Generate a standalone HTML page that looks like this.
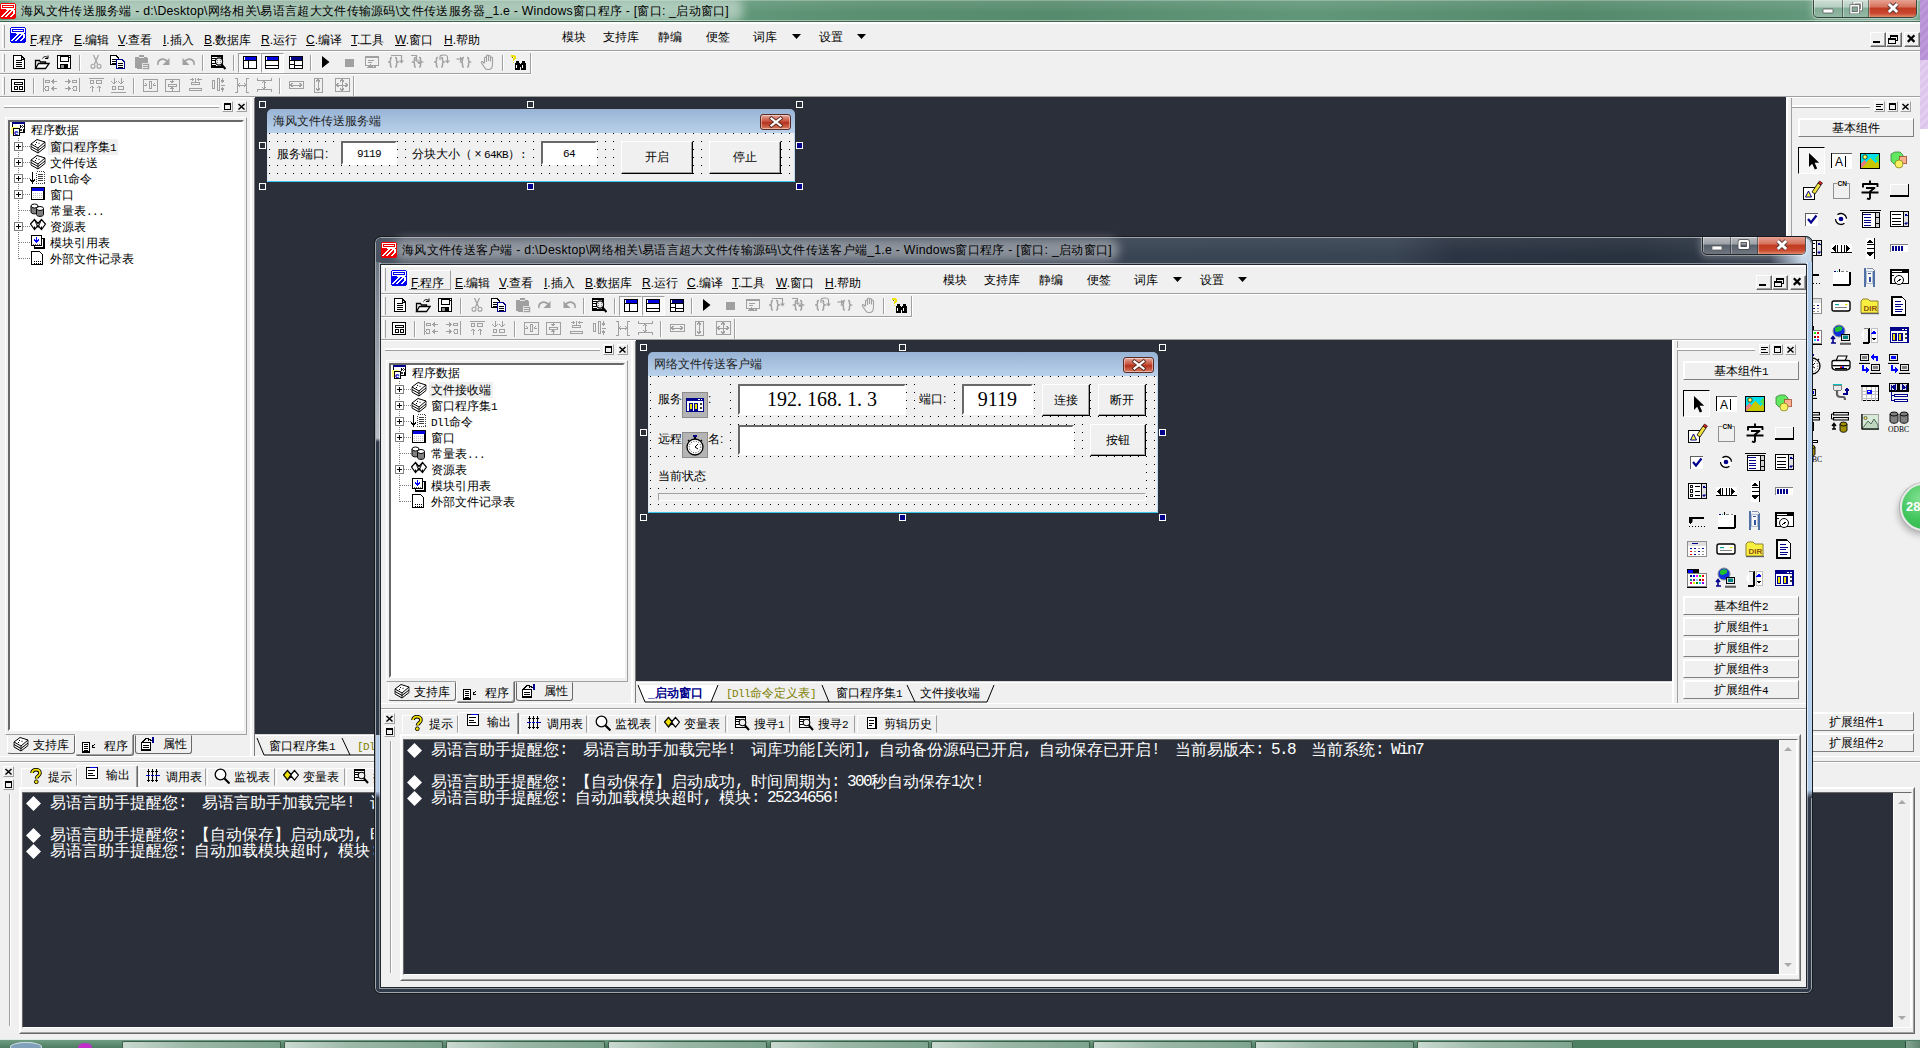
<!DOCTYPE html><html><head><meta charset="utf-8"><title>e</title><style>
html,body{margin:0;padding:0}
body{width:1928px;height:1048px;position:relative;overflow:hidden;background:#fff;font:12px/14px "Liberation Sans",sans-serif;color:#000}
div,span.t,span.o,svg,i{position:absolute;box-sizing:border-box}
svg{overflow:visible}
.t{white-space:nowrap;font-size:12px;line-height:14px}
.tc{white-space:nowrap;font-size:12px;line-height:19px;position:static}
.o{white-space:nowrap;font-size:16px;line-height:16px;color:#fff;letter-spacing:0}
.m{font:16px/16px "Liberation Mono",monospace;letter-spacing:-1.6px}
.s6{font:11px/14px "Liberation Mono",monospace;letter-spacing:-.6px}
u{text-decoration:underline}
a{display:inline-block;width:1em;text-align:center}
.rb{background:#f0f0f0;border:1px solid;border-color:#fff #696969 #696969 #fff;box-shadow:inset -1px -1px #a0a0a0}
.rb1{background:#f0f0f0;border:1px solid;border-color:#fff #a0a0a0 #a0a0a0 #fff}
</style></head><body><svg width="0" height="0" style="position:absolute"><defs><symbol id="logo_red" viewBox="0 0 16 16" shape-rendering="crispEdges"><rect x="1" y="0" width="14" height="1" fill="#f00000"/><rect x="0" y="1" width="1" height="1" fill="#f00000"/><rect x="1" y="1" width="14" height="1" fill="#fff"/><rect x="15" y="1" width="1" height="1" fill="#f00000"/><rect x="0" y="2" width="1" height="1" fill="#f00000"/><rect x="1" y="2" width="1" height="1" fill="#fff"/><rect x="2" y="2" width="12" height="1" fill="#f00000"/><rect x="14" y="2" width="1" height="1" fill="#fff"/><rect x="15" y="2" width="1" height="1" fill="#f00000"/><rect x="0" y="3" width="1" height="1" fill="#f00000"/><rect x="1" y="3" width="1" height="1" fill="#fff"/><rect x="2" y="3" width="1" height="1" fill="#f00000"/><rect x="3" y="3" width="10" height="1" fill="#fff"/><rect x="13" y="3" width="1" height="1" fill="#f00000"/><rect x="14" y="3" width="1" height="1" fill="#fff"/><rect x="15" y="3" width="1" height="1" fill="#f00000"/><rect x="0" y="4" width="1" height="1" fill="#f00000"/><rect x="1" y="4" width="1" height="1" fill="#fff"/><rect x="2" y="4" width="12" height="1" fill="#f00000"/><rect x="14" y="4" width="1" height="1" fill="#fff"/><rect x="15" y="4" width="1" height="1" fill="#f00000"/><rect x="0" y="5" width="1" height="1" fill="#f00000"/><rect x="1" y="5" width="14" height="1" fill="#fff"/><rect x="15" y="5" width="1" height="1" fill="#f00000"/><rect x="0" y="6" width="6" height="1" fill="#f00000"/><rect x="6" y="6" width="8" height="1" fill="#fff"/><rect x="14" y="6" width="2" height="1" fill="#f00000"/><rect x="0" y="7" width="7" height="1" fill="#f00000"/><rect x="7" y="7" width="2" height="1" fill="#fff"/><rect x="9" y="7" width="2" height="1" fill="#f00000"/><rect x="11" y="7" width="4" height="1" fill="#fff"/><rect x="15" y="7" width="1" height="1" fill="#f00000"/><rect x="0" y="8" width="6" height="1" fill="#f00000"/><rect x="6" y="8" width="2" height="1" fill="#fff"/><rect x="8" y="8" width="2" height="1" fill="#f00000"/><rect x="10" y="8" width="2" height="1" fill="#fff"/><rect x="12" y="8" width="1" height="1" fill="#f00000"/><rect x="13" y="8" width="2" height="1" fill="#fff"/><rect x="15" y="8" width="1" height="1" fill="#f00000"/><rect x="0" y="9" width="5" height="1" fill="#f00000"/><rect x="5" y="9" width="2" height="1" fill="#fff"/><rect x="7" y="9" width="2" height="1" fill="#f00000"/><rect x="9" y="9" width="2" height="1" fill="#fff"/><rect x="11" y="9" width="2" height="1" fill="#f00000"/><rect x="13" y="9" width="2" height="1" fill="#fff"/><rect x="15" y="9" width="1" height="1" fill="#f00000"/><rect x="0" y="10" width="4" height="1" fill="#f00000"/><rect x="4" y="10" width="2" height="1" fill="#fff"/><rect x="6" y="10" width="2" height="1" fill="#f00000"/><rect x="8" y="10" width="2" height="1" fill="#fff"/><rect x="10" y="10" width="3" height="1" fill="#f00000"/><rect x="13" y="10" width="2" height="1" fill="#fff"/><rect x="15" y="10" width="1" height="1" fill="#f00000"/><rect x="0" y="11" width="3" height="1" fill="#f00000"/><rect x="3" y="11" width="2" height="1" fill="#fff"/><rect x="5" y="11" width="2" height="1" fill="#f00000"/><rect x="7" y="11" width="2" height="1" fill="#fff"/><rect x="9" y="11" width="3" height="1" fill="#f00000"/><rect x="12" y="11" width="2" height="1" fill="#fff"/><rect x="14" y="11" width="2" height="1" fill="#f00000"/><rect x="0" y="12" width="2" height="1" fill="#f00000"/><rect x="2" y="12" width="2" height="1" fill="#fff"/><rect x="4" y="12" width="2" height="1" fill="#f00000"/><rect x="6" y="12" width="2" height="1" fill="#fff"/><rect x="8" y="12" width="3" height="1" fill="#f00000"/><rect x="11" y="12" width="2" height="1" fill="#fff"/><rect x="13" y="12" width="3" height="1" fill="#f00000"/><rect x="0" y="13" width="1" height="1" fill="#f00000"/><rect x="1" y="13" width="2" height="1" fill="#fff"/><rect x="3" y="13" width="2" height="1" fill="#f00000"/><rect x="5" y="13" width="2" height="1" fill="#fff"/><rect x="7" y="13" width="3" height="1" fill="#f00000"/><rect x="10" y="13" width="2" height="1" fill="#fff"/><rect x="12" y="13" width="4" height="1" fill="#f00000"/><rect x="0" y="14" width="16" height="1" fill="#f00000"/><rect x="1" y="15" width="14" height="1" fill="#f00000"/></symbol><symbol id="logo_blue" viewBox="0 0 16 16" shape-rendering="crispEdges"><rect x="1" y="0" width="14" height="1" fill="#0000f0"/><rect x="0" y="1" width="1" height="1" fill="#0000f0"/><rect x="1" y="1" width="14" height="1" fill="#fff"/><rect x="15" y="1" width="1" height="1" fill="#0000f0"/><rect x="0" y="2" width="1" height="1" fill="#0000f0"/><rect x="1" y="2" width="1" height="1" fill="#fff"/><rect x="2" y="2" width="12" height="1" fill="#0000f0"/><rect x="14" y="2" width="1" height="1" fill="#fff"/><rect x="15" y="2" width="1" height="1" fill="#0000f0"/><rect x="0" y="3" width="1" height="1" fill="#0000f0"/><rect x="1" y="3" width="1" height="1" fill="#fff"/><rect x="2" y="3" width="1" height="1" fill="#0000f0"/><rect x="3" y="3" width="10" height="1" fill="#fff"/><rect x="13" y="3" width="1" height="1" fill="#0000f0"/><rect x="14" y="3" width="1" height="1" fill="#fff"/><rect x="15" y="3" width="1" height="1" fill="#0000f0"/><rect x="0" y="4" width="1" height="1" fill="#0000f0"/><rect x="1" y="4" width="1" height="1" fill="#fff"/><rect x="2" y="4" width="12" height="1" fill="#0000f0"/><rect x="14" y="4" width="1" height="1" fill="#fff"/><rect x="15" y="4" width="1" height="1" fill="#0000f0"/><rect x="0" y="5" width="1" height="1" fill="#0000f0"/><rect x="1" y="5" width="14" height="1" fill="#fff"/><rect x="15" y="5" width="1" height="1" fill="#0000f0"/><rect x="0" y="6" width="6" height="1" fill="#0000f0"/><rect x="6" y="6" width="8" height="1" fill="#fff"/><rect x="14" y="6" width="2" height="1" fill="#0000f0"/><rect x="0" y="7" width="7" height="1" fill="#0000f0"/><rect x="7" y="7" width="2" height="1" fill="#fff"/><rect x="9" y="7" width="2" height="1" fill="#0000f0"/><rect x="11" y="7" width="4" height="1" fill="#fff"/><rect x="15" y="7" width="1" height="1" fill="#0000f0"/><rect x="0" y="8" width="6" height="1" fill="#0000f0"/><rect x="6" y="8" width="2" height="1" fill="#fff"/><rect x="8" y="8" width="2" height="1" fill="#0000f0"/><rect x="10" y="8" width="2" height="1" fill="#fff"/><rect x="12" y="8" width="1" height="1" fill="#0000f0"/><rect x="13" y="8" width="2" height="1" fill="#fff"/><rect x="15" y="8" width="1" height="1" fill="#0000f0"/><rect x="0" y="9" width="5" height="1" fill="#0000f0"/><rect x="5" y="9" width="2" height="1" fill="#fff"/><rect x="7" y="9" width="2" height="1" fill="#0000f0"/><rect x="9" y="9" width="2" height="1" fill="#fff"/><rect x="11" y="9" width="2" height="1" fill="#0000f0"/><rect x="13" y="9" width="2" height="1" fill="#fff"/><rect x="15" y="9" width="1" height="1" fill="#0000f0"/><rect x="0" y="10" width="4" height="1" fill="#0000f0"/><rect x="4" y="10" width="2" height="1" fill="#fff"/><rect x="6" y="10" width="2" height="1" fill="#0000f0"/><rect x="8" y="10" width="2" height="1" fill="#fff"/><rect x="10" y="10" width="3" height="1" fill="#0000f0"/><rect x="13" y="10" width="2" height="1" fill="#fff"/><rect x="15" y="10" width="1" height="1" fill="#0000f0"/><rect x="0" y="11" width="3" height="1" fill="#0000f0"/><rect x="3" y="11" width="2" height="1" fill="#fff"/><rect x="5" y="11" width="2" height="1" fill="#0000f0"/><rect x="7" y="11" width="2" height="1" fill="#fff"/><rect x="9" y="11" width="3" height="1" fill="#0000f0"/><rect x="12" y="11" width="2" height="1" fill="#fff"/><rect x="14" y="11" width="2" height="1" fill="#0000f0"/><rect x="0" y="12" width="2" height="1" fill="#0000f0"/><rect x="2" y="12" width="2" height="1" fill="#fff"/><rect x="4" y="12" width="2" height="1" fill="#0000f0"/><rect x="6" y="12" width="2" height="1" fill="#fff"/><rect x="8" y="12" width="3" height="1" fill="#0000f0"/><rect x="11" y="12" width="2" height="1" fill="#fff"/><rect x="13" y="12" width="3" height="1" fill="#0000f0"/><rect x="0" y="13" width="1" height="1" fill="#0000f0"/><rect x="1" y="13" width="2" height="1" fill="#fff"/><rect x="3" y="13" width="2" height="1" fill="#0000f0"/><rect x="5" y="13" width="2" height="1" fill="#fff"/><rect x="7" y="13" width="3" height="1" fill="#0000f0"/><rect x="10" y="13" width="2" height="1" fill="#fff"/><rect x="12" y="13" width="4" height="1" fill="#0000f0"/><rect x="0" y="14" width="16" height="1" fill="#0000f0"/><rect x="1" y="15" width="14" height="1" fill="#0000f0"/></symbol><symbol id="new" viewBox="0 0 16 16" shape-rendering="crispEdges"><path d="M3.5,1.5h7.5l3.5,3.5v9.5h-11z" fill="#fff" stroke="#000" stroke-width="1.4" /><path d="M11,1.5v3.5h3.5" fill="none" stroke="#000" stroke-width="1" /><rect x="5.5" y="6" width="6.5" height="1" fill="#000"/><rect x="5.5" y="8" width="6.5" height="1" fill="#000"/><rect x="5.5" y="10" width="6.5" height="1" fill="#000"/><rect x="5.5" y="12" width="6.5" height="1" fill="#000"/></symbol><symbol id="open" viewBox="0 0 16 16"><path d="M1.5,14.5v-8h4l1,1.5h5v2.5" fill="none" stroke="#000" stroke-width="1.3" /><path d="M1.5,14.5l3,-5h10.5l-3.5,5z" fill="#fff" stroke="#000" stroke-width="1.3" /><path d="M8.5,4.5c1.5,-2.5 4,-2.5 5,-0.5M14,1.5v3h-3" fill="none" stroke="#000" stroke-width="1" /></symbol><symbol id="save" viewBox="0 0 16 16" shape-rendering="crispEdges"><rect x="1.7" y="1.7" width="12.6" height="12.6" fill="#fff" stroke="#000" stroke-width="1.4"/><rect x="4" y="2" width="8" height="5" fill="#fff"/><rect x="4.0" y="2.0" width="8" height="5" fill="none" stroke="#000" stroke-width="1"/><rect x="4" y="10" width="8" height="4.5" fill="#000"/><rect x="5" y="11" width="3" height="3" fill="#909090"/><rect x="12.5" y="2.5" width="1" height="1.5" fill="#000"/></symbol><symbol id="cut" viewBox="0 0 16 16"><path d="M5.5,1l4,9M10.5,1l-4,9" fill="none" stroke="#a0a0a0" stroke-width="1.2" /><circle cx="5" cy="12.3" r="2" fill="none" stroke="#a0a0a0" stroke-width="1.1"/><circle cx="11" cy="12.3" r="2" fill="none" stroke="#a0a0a0" stroke-width="1.1"/></symbol><symbol id="copy" viewBox="0 0 16 16" shape-rendering="crispEdges"><path d="M0.7,1.5h5l2.5,2.5v6.5h-7.5z" fill="#fff" stroke="#000" stroke-width="1.3" /><rect x="2" y="4.5" width="4" height="1" fill="#000"/><rect x="2" y="6.5" width="4" height="1" fill="#000"/><rect x="2" y="8.5" width="4" height="1" fill="#000"/><path d="M6.7,5.5h5l2.8,2.8v6.2h-7.8z" fill="#fff" stroke="#00008b" stroke-width="1.3" /><rect x="8.2" y="9" width="4.5" height="1" fill="#000"/><rect x="8.2" y="11" width="4.5" height="1" fill="#000"/><rect x="8.2" y="13" width="4.5" height="1" fill="#000"/></symbol><symbol id="paste" viewBox="0 0 16 16" shape-rendering="crispEdges"><rect x="1" y="2.5" width="12.5" height="12" rx="1.5" fill="#a0a0a0"/><rect x="4.5" y="1" width="5.5" height="3" fill="#a0a0a0"/><rect x="5" y="3.2" width="4.5" height="1" fill="#e8e8e8"/><rect x="8.0" y="9.0" width="7" height="6" fill="#a0a0a0" stroke="#e0e0e0" stroke-width="1"/><rect x="9" y="10.5" width="5" height="1" fill="#e8e8e8"/><rect x="9" y="12.5" width="5" height="1" fill="#e8e8e8"/></symbol><symbol id="redo" viewBox="0 0 16 16"><path d="M2,11c-1,-6 6,-8 10,-3" fill="none" stroke="#a0a0a0" stroke-width="1.6" /><path d="M13.5,4v7h-7z" fill="#a0a0a0" stroke="none" stroke-width="0" /></symbol><symbol id="undo" viewBox="0 0 16 16"><path d="M14,11c1,-6 -6,-8 -10,-3" fill="none" stroke="#a0a0a0" stroke-width="1.6" /><path d="M2.5,4v7h7z" fill="#a0a0a0" stroke="none" stroke-width="0" /></symbol><symbol id="find" viewBox="0 0 16 16" shape-rendering="crispEdges"><rect x="1.3" y="1.8" width="10.4" height="10.9" fill="#fff" stroke="#000" stroke-width="1.6"/><rect x="2" y="3.5" width="4" height="1.2" fill="#000"/><rect x="2" y="6" width="4" height="1.2" fill="#000"/><rect x="2" y="8.5" width="4" height="1.2" fill="#000"/><rect x="2" y="11" width="4" height="1.2" fill="#000"/><circle cx="9" cy="7.5" r="3.6" fill="#f0f0f0" stroke="#000" stroke-width="1.2" shape-rendering="auto"/><rect x="7.3" y="6" width="1" height="1" fill="#888"/><rect x="9.7" y="6" width="1" height="1" fill="#888"/><rect x="7.3" y="8.3" width="1" height="1" fill="#888"/><rect x="9.7" y="8.3" width="1" height="1" fill="#888"/><path d="M11.5,10.5l4,4.5" fill="none" stroke="#000" stroke-width="2.2" shape-rendering="auto"/></symbol><symbol id="lay1" viewBox="0 0 16 16" shape-rendering="crispEdges"><rect x="1.6" y="2.1" width="12.8" height="12.3" fill="#fff" stroke="#000" stroke-width="1.2"/><rect x="2.5" y="3" width="11" height="2.5" fill="#0000e0"/><rect x="1.5" y="6" width="13" height="1.3" fill="#000"/><rect x="5.5" y="6" width="1.3" height="8.5" fill="#000"/></symbol><symbol id="lay2" viewBox="0 0 16 16" shape-rendering="crispEdges"><rect x="1.6" y="2.1" width="12.8" height="12.3" fill="#fff" stroke="#000" stroke-width="1.2"/><rect x="2.5" y="3" width="11" height="2.5" fill="#0000e0"/><rect x="1.5" y="6" width="13" height="1.3" fill="#000"/><rect x="1.5" y="10.5" width="13" height="1.3" fill="#000"/></symbol><symbol id="lay3" viewBox="0 0 16 16" shape-rendering="crispEdges"><rect x="1.6" y="2.1" width="12.8" height="12.3" fill="#fff" stroke="#000" stroke-width="1.2"/><rect x="2.5" y="3" width="11" height="2.5" fill="#00008b"/><rect x="1.5" y="6" width="13" height="1.3" fill="#000"/><rect x="5.5" y="6" width="1.3" height="8.5" fill="#000"/><rect x="1.5" y="9.5" width="4" height="1.3" fill="#000"/><rect x="6" y="11" width="8" height="1.3" fill="#000"/></symbol><symbol id="run" viewBox="0 0 16 16"><path d="M4,2v12l7.5,-6z" fill="#000" stroke="none" stroke-width="0" /></symbol><symbol id="stop" viewBox="0 0 16 16" shape-rendering="crispEdges"><rect x="3" y="4.5" width="8.5" height="8.5" fill="#a0a0a0"/></symbol><symbol id="dbg1" viewBox="0 0 16 16" shape-rendering="crispEdges"><rect x="1.65" y="2.65" width="12.7" height="8.7" fill="none" stroke="#a0a0a0" stroke-width="1.3"/><rect x="1" y="2" width="14" height="2" fill="#a0a0a0"/><rect x="4" y="6" width="6" height="1" fill="#a0a0a0"/><rect x="4" y="8" width="4" height="1" fill="#a0a0a0"/><path d="M3,14l3,-4l3,3l3,-3v4z" fill="#a0a0a0" stroke="none" stroke-width="0" /></symbol><symbol id="dbg2" viewBox="0 0 16 16"><path d="M4,3.5c-2,0 -1.5,1.5 -1.5,3c0,1 -1,1.3 -1.5,1.5c0.5,0.2 1.5,0.5 1.5,1.5c0,1.5 -0.5,3.5 1.5,3.5" fill="none" stroke="#a0a0a0" stroke-width="1.5" /><path d="M7,3.5c2,0 1.5,1.5 1.5,3c0,1 1,1.3 1.5,1.5c-0.5,0.2 -1.5,0.5 -1.5,1.5c0,1.5 0.5,3.5 -1.5,3.5" fill="none" stroke="#a0a0a0" stroke-width="1.5" /><path d="M3,1.5h10.5v6" fill="none" stroke="#a0a0a0" stroke-width="1.2" /><path d="M11,6.5h5l-2.5,3z" fill="#a0a0a0" stroke="none" stroke-width="0" /></symbol><symbol id="dbg3" viewBox="0 0 16 16"><path d="M6,3.5c-2,0 -1.5,1.5 -1.5,3c0,1 -1,1.3 -1.5,1.5c0.5,0.2 1.5,0.5 1.5,1.5c0,1.5 -0.5,3.5 1.5,3.5" fill="none" stroke="#a0a0a0" stroke-width="1.5" /><path d="M9,3.5c2,0 1.5,1.5 1.5,3c0,1 1,1.3 1.5,1.5c-0.5,0.2 -1.5,0.5 -1.5,1.5c0,1.5 0.5,3.5 -1.5,3.5" fill="none" stroke="#a0a0a0" stroke-width="1.5" /><path d="M1,1.5h5.5v4" fill="none" stroke="#a0a0a0" stroke-width="1.2" /><path d="M4.5,5.5h4l-2,2.5z" fill="#a0a0a0" stroke="none" stroke-width="0" /><path d="M9,6v3M7.5,8h3l-1.5,2z" fill="#a0a0a0" stroke="#a0a0a0" stroke-width="0.8" /></symbol><symbol id="dbg4" viewBox="0 0 16 16"><path d="M4,3.5c-2,0 -1.5,1.5 -1.5,3c0,1 -1,1.3 -1.5,1.5c0.5,0.2 1.5,0.5 1.5,1.5c0,1.5 -0.5,3.5 1.5,3.5" fill="none" stroke="#a0a0a0" stroke-width="1.5" /><path d="M7,3.5c2,0 1.5,1.5 1.5,3c0,1 1,1.3 1.5,1.5c-0.5,0.2 -1.5,0.5 -1.5,1.5c0,1.5 0.5,3.5 -1.5,3.5" fill="none" stroke="#a0a0a0" stroke-width="1.5" /><path d="M6,6v-3.5q0,-1.5 3.5,-1.5q4,0 4,2v4" fill="none" stroke="#a0a0a0" stroke-width="1.2" /><path d="M11,6.5h5l-2.5,3z" fill="#a0a0a0" stroke="none" stroke-width="0" /></symbol><symbol id="dbg5" viewBox="0 0 16 16"><path d="M8,3.5c-2,0 -1.5,1.5 -1.5,3c0,1 -1,1.3 -1.5,1.5c0.5,0.2 1.5,0.5 1.5,1.5c0,1.5 -0.5,3.5 1.5,3.5" fill="none" stroke="#a0a0a0" stroke-width="1.5" /><path d="M11,3.5c2,0 1.5,1.5 1.5,3c0,1 1,1.3 1.5,1.5c-0.5,0.2 -1.5,0.5 -1.5,1.5c0,1.5 0.5,3.5 -1.5,3.5" fill="none" stroke="#a0a0a0" stroke-width="1.5" /><path d="M0.5,5h5" fill="none" stroke="#a0a0a0" stroke-width="1.2" /><path d="M4,2.5l3,2.5l-3,2.5z" fill="#a0a0a0" stroke="none" stroke-width="0" /></symbol><symbol id="hand" viewBox="0 0 16 16"><path d="M4.5,9v-5q0,-1 1,-1t1,1v4M6.5,7v-5q0,-1 1,-1t1,1v5M8.5,7v-4.5q0,-1 1,-1t1,1v5M10.5,7.5v-3.5q0,-1 1,-1t1,1v6q0,5.5 -4,5.5h-1q-2,0 -3,-2l-3,-4.5q-0.5,-1.5 1,-1.5l2,2" fill="none" stroke="#a0a0a0" stroke-width="1.1" /></symbol><symbol id="bino" viewBox="0 0 16 16" shape-rendering="crispEdges"><rect x="1" y="1" width="4" height="1.6" fill="#f0e000"/><rect x="4" y="2" width="1.6" height="2.5" fill="#f0e000"/><rect x="2.5" y="4" width="2.6" height="1.5" fill="#f0e000"/><rect x="2.5" y="5.5" width="1.6" height="1.3" fill="#f0e000"/><rect x="2.5" y="7.8" width="1.6" height="1.5" fill="#f0e000"/><rect x="1.5" y="2.6" width="1.2" height="1" fill="#807000"/><rect x="4.5" y="9" width="5" height="6.5" fill="#000"/><rect x="10.5" y="9" width="5" height="6.5" fill="#000"/><rect x="5.5" y="7" width="3" height="2.5" fill="#000"/><rect x="11.5" y="7" width="3" height="2.5" fill="#000"/><rect x="9" y="10" width="2" height="3" fill="#000"/><rect x="5.8" y="11" width="1" height="3" fill="#fff"/><rect x="11.8" y="11" width="1" height="3" fill="#fff"/></symbol><symbol id="form" viewBox="0 0 16 16" shape-rendering="crispEdges"><rect x="1.65" y="2.65" width="12.7" height="11.7" fill="#fff" stroke="#000" stroke-width="1.3"/><rect x="4.0" y="5.0" width="8" height="2" fill="none" stroke="#000" stroke-width="1"/><rect x="4.0" y="9.5" width="3" height="3" fill="none" stroke="#000" stroke-width="1"/><rect x="9.0" y="9.5" width="3" height="3" fill="none" stroke="#000" stroke-width="1"/></symbol><symbol id="al1" viewBox="0 0 16 16" shape-rendering="crispEdges"><rect x="0.5" y="1" width="1" height="14" fill="#a0a0a0"/><rect x="3.5" y="3.0" width="4" height="2.5" fill="none" stroke="#a0a0a0" stroke-width="1"/><circle cx="5" cy="11.5" r="2" fill="none" stroke="#a0a0a0" stroke-width="1"/><path d="M15,4.5h-5M12,2.5l-2.5,2l2.5,2M15,11.5h-5M12,9.5l-2.5,2l2.5,2" fill="none" stroke="#a0a0a0" stroke-width="1" /></symbol><symbol id="al2" viewBox="0 0 16 16" shape-rendering="crispEdges"><rect x="14.5" y="1" width="1" height="14" fill="#a0a0a0"/><rect x="8.5" y="3.0" width="4" height="2.5" fill="none" stroke="#a0a0a0" stroke-width="1"/><circle cx="11" cy="11.5" r="2" fill="none" stroke="#a0a0a0" stroke-width="1"/><path d="M1,4.5h5M4,2.5l2.5,2l-2.5,2M1,11.5h5M4,9.5l2.5,2l-2.5,2" fill="none" stroke="#a0a0a0" stroke-width="1" /></symbol><symbol id="al3" viewBox="0 0 16 16" shape-rendering="crispEdges"><rect x="0.5" y="0.5" width="15" height="1" fill="#a0a0a0"/><circle cx="4" cy="5" r="2" fill="none" stroke="#a0a0a0" stroke-width="1"/><rect x="8.5" y="3.5" width="5" height="3" fill="none" stroke="#a0a0a0" stroke-width="1"/><path d="M4,15v-6M1.5,11.5l2.5,-2.5l2.5,2.5M11,15v-6M8.5,11.5l2.5,-2.5l2.5,2.5" fill="none" stroke="#a0a0a0" stroke-width="1" /></symbol><symbol id="al4" viewBox="0 0 16 16" shape-rendering="crispEdges"><rect x="0.5" y="14.5" width="15" height="1" fill="#a0a0a0"/><circle cx="4" cy="11" r="2" fill="none" stroke="#a0a0a0" stroke-width="1"/><rect x="8.5" y="9.5" width="5" height="3" fill="none" stroke="#a0a0a0" stroke-width="1"/><path d="M4,1v6M1.5,4.5l2.5,2.5l2.5,-2.5M11,1v6M8.5,4.5l2.5,2.5l2.5,-2.5" fill="none" stroke="#a0a0a0" stroke-width="1" /></symbol><symbol id="al5" viewBox="0 0 16 16" shape-rendering="crispEdges"><rect x="1.0" y="2.0" width="14" height="12" fill="none" stroke="#a0a0a0" stroke-width="1"/><rect x="7.0" y="4.5" width="2" height="7" fill="none" stroke="#a0a0a0" stroke-width="1"/><path d="M2,8h3M3.5,6.5l1.5,1.5l-1.5,1.5M14,8h-3M12.5,6.5l-1.5,1.5l1.5,1.5" fill="none" stroke="#a0a0a0" stroke-width="1" /></symbol><symbol id="al6" viewBox="0 0 16 16" shape-rendering="crispEdges"><rect x="1.0" y="2.0" width="14" height="12" fill="none" stroke="#a0a0a0" stroke-width="1"/><rect x="4.0" y="7.0" width="8" height="2" fill="none" stroke="#a0a0a0" stroke-width="1"/><path d="M8,2.5v3M6.5,4l1.5,1.5l1.5,-1.5M8,13.5v-3M6.5,12l1.5,-1.5l1.5,1.5" fill="none" stroke="#a0a0a0" stroke-width="1" /></symbol><symbol id="al7" viewBox="0 0 16 16" shape-rendering="crispEdges"><rect x="3.5" y="5.5" width="8" height="2" fill="none" stroke="#a0a0a0" stroke-width="1"/><rect x="1.5" y="11.5" width="12" height="2" fill="none" stroke="#a0a0a0" stroke-width="1"/><path d="M1.5,2.5h4M4,1l1.5,1.5l-1.5,1.5M13.5,2.5h-4M11,1l-1.5,1.5l1.5,1.5M7.5,0.5v4" fill="none" stroke="#a0a0a0" stroke-width="1" /></symbol><symbol id="al8" viewBox="0 0 16 16" shape-rendering="crispEdges"><rect x="2.0" y="3.5" width="2" height="8" fill="none" stroke="#a0a0a0" stroke-width="1"/><rect x="7.0" y="1.5" width="2" height="12" fill="none" stroke="#a0a0a0" stroke-width="1"/><path d="M12.5,1v4M11,3.5l1.5,1.5l1.5,-1.5M12.5,15v-4M11,12.5l1.5,-1.5l1.5,1.5M10.5,8h4" fill="none" stroke="#a0a0a0" stroke-width="1" /></symbol><symbol id="al9" viewBox="0 0 16 16" shape-rendering="crispEdges"><path d="M1,1h2.5v14h-2.5M15,1h-2.5v14h2.5M4,8h8M6,6l-2,2l2,2M10,6l2,2l-2,2" fill="none" stroke="#a0a0a0" stroke-width="1" /></symbol><symbol id="al10" viewBox="0 0 16 16" shape-rendering="crispEdges"><path d="M1,1v2.5h14v-2.5M1,15v-2.5h14v2.5M8,4v8M6,6l2,-2l2,2M6,10l2,2l2,-2" fill="none" stroke="#a0a0a0" stroke-width="1" /></symbol><symbol id="sz1" viewBox="0 0 16 16" shape-rendering="crispEdges"><rect x="1.0" y="4.5" width="14" height="7" fill="none" stroke="#a0a0a0" stroke-width="1"/><path d="M2.5,8h11M4.5,6l-2,2l2,2M11.5,6l2,2l-2,2" fill="none" stroke="#a0a0a0" stroke-width="1" /></symbol><symbol id="sz2" viewBox="0 0 16 16" shape-rendering="crispEdges"><rect x="4.0" y="1.0" width="8" height="14" fill="none" stroke="#a0a0a0" stroke-width="1"/><path d="M8,2.5v11M6,4.5l2,-2l2,2M6,11.5l2,2l2,-2" fill="none" stroke="#a0a0a0" stroke-width="1" /></symbol><symbol id="sz3" viewBox="0 0 16 16" shape-rendering="crispEdges"><rect x="1.0" y="1.5" width="14" height="13" fill="none" stroke="#a0a0a0" stroke-width="1"/><path d="M2.5,8h11M4.5,6l-2,2l2,2M11.5,6l2,2l-2,2M8,2.5v11M6,4.5l2,-2l2,2M6,11.5l2,2l2,-2" fill="none" stroke="#a0a0a0" stroke-width="1" /></symbol><symbol id="cap_min" viewBox="0 0 16 15" shape-rendering="crispEdges"><rect x="2" y="8" width="7" height="2" fill="#000"/></symbol><symbol id="cap_restore" viewBox="0 0 16 15" shape-rendering="crispEdges"><rect x="3.5" y="2.5" width="7" height="5" fill="none" stroke="#000" stroke-width="1"/><rect x="3" y="2" width="8" height="2" fill="#000"/><rect x="1.5" y="5.5" width="7" height="5" fill="#f0f0f0" stroke="#000" stroke-width="1"/><rect x="1" y="5" width="8" height="2" fill="#000"/></symbol><symbol id="cap_close" viewBox="0 0 16 15"><path d="M2.8,2.3l6.6,6.6M9.4,2.3l-6.6,6.6" fill="none" stroke="#000" stroke-width="2.2" /></symbol><symbol id="sm_float" viewBox="0 0 9 9" shape-rendering="crispEdges"><rect x="1.5" y="1.5" width="6" height="6" fill="none" stroke="#000" stroke-width="1"/><rect x="1" y="1" width="7" height="2" fill="#000"/></symbol><symbol id="sm_close" viewBox="0 0 9 9"><path d="M1.5,2l6,5.5M7.5,2l-6,5.5" fill="none" stroke="#000" stroke-width="1.5" /></symbol><symbol id="sm_menu" viewBox="0 0 9 9" shape-rendering="crispEdges"><rect x="1" y="1.5" width="7" height="1" fill="#000"/><rect x="1" y="4" width="5" height="1" fill="#000"/><rect x="1" y="6.5" width="7" height="1" fill="#000"/></symbol><symbol id="aero_min" viewBox="0 0 14 12"><rect x="2" y="7" width="10" height="4" rx="0.5" fill="#fff" stroke="#555" stroke-width="0.8"/></symbol><symbol id="aero_max" viewBox="0 0 14 12"><rect x="2.5" y="2" width="8.5" height="7" rx="0.5" fill="none" stroke="#444" stroke-width="3.6"/><rect x="2.5" y="2" width="8.5" height="7" rx="0.5" fill="none" stroke="#fff" stroke-width="2.2"/></symbol><symbol id="aero_max2" viewBox="0 0 14 12"><rect x="5" y="0.8" width="7.5" height="7" fill="none" stroke="#555" stroke-width="2.8"/><rect x="5" y="0.8" width="7.5" height="7" fill="none" stroke="#fff" stroke-width="1.5"/><rect x="2" y="3.8" width="7.5" height="7" fill="#86a896" stroke="#555" stroke-width="2.8"/><rect x="2" y="3.8" width="7.5" height="7" fill="none" stroke="#fff" stroke-width="1.5"/></symbol><symbol id="aero_close" viewBox="0 0 14 12"><path d="M2.8,2L11.2,10M11.2,2L2.8,10" stroke="#5a3a3a" stroke-width="4.6"/><path d="M2.8,2L11.2,10M11.2,2L2.8,10" stroke="#fff" stroke-width="2.9"/></symbol><symbol id="t_root" viewBox="0 0 16 16" shape-rendering="crispEdges"><rect x="1.5" y="0.5" width="12" height="10" fill="#fff" stroke="#000" stroke-width="1"/><rect x="1" y="0" width="13" height="2" fill="#00008b"/><rect x="0" y="5" width="7" height="7" fill="#ffff80"/><rect x="2.5" y="6.5" width="6" height="7" fill="#fff" stroke="#000" stroke-width="1"/><text x="3" y="12.5" font-size="8" font-weight="bold" fill="#0000c0" font-family="Liberation Sans">e</text><rect x="9" y="3" width="1" height="3" fill="#000"/><circle cx="11.5" cy="4.5" r="1" fill="none" stroke="#000" stroke-width=".8"/><circle cx="9.5" cy="8" r="1" fill="none" stroke="#000" stroke-width=".8"/><rect x="11.5" y="7" width="1" height="2.5" fill="#000"/></symbol><symbol id="t_set" viewBox="0 0 16 16"><path d="M1,8.5l7,4l7,-5.5M1,11l7,4l7,-5.5" fill="none" stroke="#000" stroke-width="1" /><path d="M1,6l6,-4.5l8,2.5l-7,6z" fill="#fff" stroke="#000" stroke-width="1" /><rect x="6" y="4" width="1" height="1" fill="#000"/><rect x="8.5" y="4.8" width="1" height="1" fill="#000"/><rect x="5" y="6" width="1" height="1" fill="#000"/><path d="M1,6v5M8,10v5M15,4v5.5" fill="none" stroke="#000" stroke-width="0.8" /></symbol><symbol id="t_dll" viewBox="0 0 16 16" shape-rendering="crispEdges"><path d="M2.5,1.5v11M0.5,9.5l2,3l2,-3" fill="none" stroke="#000" stroke-width="1.3" /><rect x="6.5" y="1.5" width="8" height="12" fill="none" stroke="#404040" stroke-width="1" stroke-dasharray="1 1"/><rect x="8" y="4" width="5" height="1" fill="#404040"/><rect x="8" y="6" width="5" height="1" fill="#404040"/><rect x="8" y="8" width="5" height="1" fill="#404040"/><rect x="8" y="10" width="5" height="1" fill="#404040"/></symbol><symbol id="t_win" viewBox="0 0 16 16" shape-rendering="crispEdges"><rect x="1.1" y="1.6" width="12.8" height="11.8" fill="#fff" stroke="#000" stroke-width="1.2"/><rect x="1.5" y="2" width="12" height="2.5" fill="#0000e0"/><rect x="3" y="7" width="1" height="1" fill="#c0c0c0"/><rect x="3" y="9" width="1" height="1" fill="#c0c0c0"/><rect x="3" y="11" width="1" height="1" fill="#c0c0c0"/><rect x="5" y="7" width="1" height="1" fill="#c0c0c0"/><rect x="5" y="9" width="1" height="1" fill="#c0c0c0"/><rect x="5" y="11" width="1" height="1" fill="#c0c0c0"/><rect x="7" y="7" width="1" height="1" fill="#c0c0c0"/><rect x="7" y="9" width="1" height="1" fill="#c0c0c0"/><rect x="7" y="11" width="1" height="1" fill="#c0c0c0"/><rect x="9" y="7" width="1" height="1" fill="#c0c0c0"/><rect x="9" y="9" width="1" height="1" fill="#c0c0c0"/><rect x="9" y="11" width="1" height="1" fill="#c0c0c0"/><rect x="11" y="7" width="1" height="1" fill="#c0c0c0"/><rect x="11" y="9" width="1" height="1" fill="#c0c0c0"/><rect x="11" y="11" width="1" height="1" fill="#c0c0c0"/></symbol><symbol id="t_const" viewBox="0 0 16 16"><path d="M1,4v6c0,2.5 7,2.5 7,0v-6" fill="#808080" stroke="#000"/><ellipse cx="4.5" cy="4" rx="3.5" ry="2" fill="#fff" stroke="#000"/><path d="M6.5,6.5v6c0,2.5 7,2.5 7,0v-6" fill="#808080" stroke="#000"/><ellipse cx="10" cy="6.5" rx="3.5" ry="2" fill="#fff" stroke="#000"/></symbol><symbol id="t_res" viewBox="0 0 16 16"><path d="M0.5,6l4,-4.5l3.5,4l3.5,-4l4,4.5l-4,5.5l-3.5,-4l-3.5,4z" fill="#fff" stroke="#000" stroke-width="1.2" /><path d="M4.5,1.5l3.5,8l3.5,-8" fill="none" stroke="#000" stroke-width="1" /><path d="M4.5,11.5v-3M11.5,11.5v-3" fill="none" stroke="#000" stroke-width="1" /></symbol><symbol id="t_mod" viewBox="0 0 16 16" shape-rendering="crispEdges"><rect x="4.05" y="4.05" width="9.9" height="9.9" fill="#fff" stroke="#000" stroke-width="1.1"/><rect x="1.55" y="1.55" width="9.9" height="9.9" fill="#fff" stroke="#000" stroke-width="1.1"/><path d="M6.5,2.5v5M4.5,5.5l2,2.5l2,-2.5" fill="none" stroke="#0000ff" stroke-width="1.4" /><rect x="3" y="9.5" width="1" height="1" fill="#606060"/><rect x="5" y="9.5" width="1" height="1" fill="#606060"/><rect x="7" y="9.5" width="1" height="1" fill="#606060"/><rect x="9" y="9.5" width="1" height="1" fill="#606060"/></symbol><symbol id="t_ext" viewBox="0 0 16 16" shape-rendering="crispEdges"><path d="M1.5,1.5h8l3,3v10h-11z" fill="#fff" stroke="#000" stroke-width="1.1" /><rect x="4" y="10.5" width="1" height="1" fill="#000"/><rect x="6" y="10.5" width="1" height="1" fill="#000"/><rect x="8" y="10.5" width="1" height="1" fill="#000"/><rect x="10" y="10.5" width="1" height="1" fill="#000"/><rect x="4" y="12.5" width="1" height="1" fill="#000"/><rect x="6" y="12.5" width="1" height="1" fill="#000"/><rect x="8" y="12.5" width="1" height="1" fill="#000"/><rect x="10" y="12.5" width="1" height="1" fill="#000"/></symbol><symbol id="tab_lib" viewBox="0 0 16 16"><path d="M1,8.5l7,4l7,-5.5M1,11l7,4l7,-5.5" fill="none" stroke="#000" stroke-width="1" /><path d="M1,6l6,-4.5l8,2.5l-7,6z" fill="#fff" stroke="#000" stroke-width="1" /><rect x="6" y="4" width="1" height="1" fill="#000"/><rect x="8.5" y="4.8" width="1" height="1" fill="#000"/><rect x="5" y="6" width="1" height="1" fill="#000"/><path d="M1,6v5M8,10v5M15,4v5.5" fill="none" stroke="#000" stroke-width="0.8" /></symbol><symbol id="tab_prog" viewBox="0 0 16 16" shape-rendering="crispEdges"><rect x="1.6" y="3.1" width="6.8" height="9.8" fill="#fff" stroke="#000" stroke-width="1.2"/><rect x="3" y="5" width="4" height="1" fill="#000"/><rect x="3" y="7" width="4" height="1" fill="#000"/><rect x="3" y="9" width="4" height="1" fill="#000"/><rect x="3" y="11" width="4" height="1" fill="#000"/><path d="M14,5l-3,3M11,5.5v2.5h2.5" fill="none" stroke="#000" stroke-width="1" /></symbol><symbol id="tab_prop" viewBox="0 0 16 16" shape-rendering="crispEdges"><rect x="1.6" y="6.6" width="8.8" height="7.3" fill="#fff" stroke="#000" stroke-width="1.2"/><rect x="3" y="8.5" width="6" height="1" fill="#000"/><rect x="3" y="11" width="6" height="1" fill="#000"/><path d="M2,6l5,-4l5,3" fill="none" stroke="#000" stroke-width="1.2" /><rect x="11.5" y="0.5" width="2.5" height="6" fill="#00008b"/><path d="M8,5l2,-2" fill="none" stroke="#000" stroke-width="1" /></symbol><symbol id="o_hint" viewBox="0 0 16 16"><path d="M4,5c0,-4.5 8,-4.5 8,0c0,3 -3.5,3 -3.5,5.5" fill="none" stroke="#000" stroke-width="3.6"/><path d="M4,5c0,-4.5 8,-4.5 8,0c0,3 -3.5,3 -3.5,5.5" fill="none" stroke="#f0e000" stroke-width="1.8"/><circle cx="8.3" cy="13.8" r="1.9" fill="#f0e000" stroke="#000" stroke-width=".9"/></symbol><symbol id="o_out" viewBox="0 0 16 16" shape-rendering="crispEdges"><rect x="1.65" y="1.15" width="10.7" height="11.2" fill="#fff" stroke="#000" stroke-width="1.3"/><rect x="5" y="0.5" width="7" height="1.6" fill="#0000e0"/><rect x="3" y="4" width="6.5" height="1" fill="#000"/><rect x="3" y="6.5" width="5" height="1" fill="#000"/><rect x="3" y="9" width="6.5" height="1" fill="#000"/></symbol><symbol id="o_call" viewBox="0 0 16 16" shape-rendering="crispEdges"><rect x="2" y="1" width="1.2" height="13" fill="#000"/><rect x="6" y="1" width="1.2" height="13" fill="#000"/><rect x="10" y="1" width="1.2" height="13" fill="#000"/><rect x="1" y="2.5" width="3.2" height="1.2" fill="#000"/><rect x="1" y="11.5" width="3.2" height="1.2" fill="#000"/><rect x="5" y="2.5" width="3.2" height="1.2" fill="#000"/><rect x="5" y="11.5" width="3.2" height="1.2" fill="#000"/><rect x="9" y="2.5" width="3.2" height="1.2" fill="#000"/><rect x="9" y="11.5" width="3.2" height="1.2" fill="#000"/><rect x="0" y="7" width="14" height="1" fill="#0000c0"/><rect x="3.5" y="7" width="1.5" height="1" fill="#fff"/><rect x="7.8" y="7" width="1.5" height="1" fill="#fff"/></symbol><symbol id="o_watch" viewBox="0 0 16 16"><circle cx="6.5" cy="6.5" r="5.3" fill="#fff" stroke="#000" stroke-width="1.3"/><path d="M10.5,10.5l5,5" stroke="#000" stroke-width="2.2"/></symbol><symbol id="o_var" viewBox="0 0 16 16"><path d="M0.5,7l4,-4.5l3.5,4l3.5,-4l4,4.5l-4,5l-3.5,-4l-3.5,4z" fill="#fff" stroke="#000" stroke-width="1.2" /><path d="M0.8,7l3.7,-4.2l3.2,4l-3.2,4.6z" fill="#f0e000" stroke="#000" stroke-width="1" /><path d="M8,6.5v3.5" fill="none" stroke="#000" stroke-width="1" /></symbol><symbol id="o_find" viewBox="0 0 16 16" shape-rendering="crispEdges"><rect x="1.25" y="1.75" width="10.0" height="10.5" fill="#fff" stroke="#000" stroke-width="1.5"/><rect x="2" y="3.5" width="3.5" height="1.1" fill="#000"/><rect x="2" y="6" width="3.5" height="1.1" fill="#000"/><rect x="2" y="8.5" width="3.5" height="1.1" fill="#000"/><circle cx="8.5" cy="7.5" r="3.3" fill="#f0f0f0" stroke="#000" stroke-width="1.1" shape-rendering="auto"/><path d="M11,10.5l4,4.5" fill="none" stroke="#000" stroke-width="2" shape-rendering="auto"/></symbol><symbol id="o_clip" viewBox="0 0 16 16" shape-rendering="crispEdges"><rect x="3.15" y="2.65" width="8.7" height="10.7" fill="#fff" stroke="#000" stroke-width="1.3"/><rect x="5" y="5" width="5" height="1" fill="#000"/><rect x="5" y="7.5" width="5" height="1" fill="#000"/><rect x="5" y="10" width="3" height="1" fill="#000"/></symbol><symbol id="c_arrow" viewBox="0 0 24 24"><path d="M9,4v14l3.2,-3.2l2.6,5.7l2.4,-1.1l-2.6,-5.6h4.6z" fill="#000" stroke="none" stroke-width="0" /></symbol><symbol id="c_edit" viewBox="0 0 24 24" shape-rendering="crispEdges"><rect x="2" y="5" width="21" height="15" fill="#fff"/><rect x="2" y="4" width="21" height="1.3" fill="#606060"/><rect x="2" y="4" width="1.3" height="15" fill="#000"/><text x="6" y="17" font-size="12" fill="#000" font-family="Liberation Sans">A</text><rect x="15.5" y="7" width="1" height="11" fill="#000"/></symbol><symbol id="c_pic" viewBox="0 0 24 24" shape-rendering="crispEdges"><rect x="2.5" y="4.5" width="19" height="15" fill="#00e0e8" stroke="#000" stroke-width="1"/><circle cx="7" cy="8" r="2.2" fill="#ffff60" stroke="#000" stroke-width=".7" shape-rendering="auto"/><path d="M3,19l9,-10l5,5l4,-4v9z" fill="#c8c800" stroke="none" stroke-width="0" /><path d="M17,9l4,-3v9z" fill="#50e050" stroke="none" stroke-width="0" /><path d="M3,19v-5l3,-3l3,3z" fill="#e08080" stroke="none" stroke-width="0" /></symbol><symbol id="c_shape" viewBox="0 0 24 24"><path d="M4,5l4,-2h5l3,3v6l-4,3h-5l-3,-3z" fill="#60e860" stroke="#408040" stroke-width="0.8" /><rect x="12.4" y="7.4" width="7.2" height="7.2" fill="#ffb090" stroke="#a05030" stroke-width="0.8"/><circle cx="12" cy="15" r="4" fill="#f8f060" stroke="#888820" stroke-width=".8"/></symbol><symbol id="c_draw" viewBox="0 0 24 24"><rect x="3.5" y="9.5" width="11" height="12" fill="#fff" stroke="#000" stroke-width="1"/><path d="M5.5,19l3,-6l3,6z" fill="#ffff40" stroke="#00008b" stroke-width="1" /><path d="M12,14l6,-9l3,2l-6,9z" fill="#f0e040" stroke="#000" stroke-width="0.8" /><path d="M18,5l1.5,-2l3,2l-1.5,2z" fill="#e02020" stroke="#000" stroke-width="0.6" /></symbol><symbol id="c_group" viewBox="0 0 24 24" shape-rendering="crispEdges"><rect x="4.6" y="5.6" width="15.8" height="14.8" fill="none" stroke="#909090" stroke-width="1.2"/><rect x="8" y="3" width="9" height="5" fill="#f0f0f0"/><text x="8.5" y="8" font-size="6.5" font-weight="bold" font-family="Liberation Sans">CN</text></symbol><symbol id="c_label" viewBox="0 0 24 24"><path d="M12,2.5v2.5M5,9.5v-3.5h14.5v3M8,10h8.5l-4.5,3.5v6.5q0,1.8 -3,0.3M3.5,14.5h17" fill="none" stroke="#000" stroke-width="1.9" stroke-linejoin="round"/></symbol><symbol id="c_button" viewBox="0 0 24 24" shape-rendering="crispEdges"><rect x="3" y="6" width="18" height="1" fill="#fff"/><rect x="3" y="6" width="1" height="12" fill="#fff"/><rect x="3" y="17" width="19" height="1.6" fill="#000"/><rect x="20.5" y="6" width="1.6" height="12" fill="#000"/></symbol><symbol id="c_check" viewBox="0 0 24 24" shape-rendering="crispEdges"><rect x="6" y="7" width="12" height="12" fill="#fff"/><rect x="5" y="6" width="13" height="1.3" fill="#606060"/><rect x="5" y="6" width="1.3" height="13" fill="#606060"/><path d="M8,12l3,3.5l5.5,-7" fill="none" stroke="#00008b" stroke-width="2.2" shape-rendering="auto"/></symbol><symbol id="c_radio" viewBox="0 0 24 24"><circle cx="12" cy="12" r="5.5" fill="#fff" stroke="#000" stroke-width="1.3" stroke-dasharray="12 5" transform="rotate(-130 12 12)"/><circle cx="12" cy="12" r="2.3" fill="#00008b"/></symbol><symbol id="c_combo" viewBox="0 0 24 24" shape-rendering="crispEdges"><rect x="2" y="3" width="21" height="1.3" fill="#000"/><rect x="4.6" y="5.6" width="16.8" height="14.8" fill="#fff" stroke="#000" stroke-width="1.2"/><rect x="17.5" y="5.5" width="4" height="15" fill="#d0d0d0" stroke="#000" stroke-width="1"/><rect x="5" y="6.5" width="8" height="1.2" fill="#00008b"/><rect x="6" y="10" width="7" height="1.2" fill="#00008b"/><rect x="6" y="12.5" width="7" height="1.2" fill="#00008b"/><rect x="6" y="15" width="7" height="1.2" fill="#00008b"/><rect x="6" y="17.5" width="7" height="1.2" fill="#00008b"/><rect x="17.5" y="10" width="4" height="1" fill="#000"/><rect x="17.5" y="16" width="4" height="1" fill="#000"/></symbol><symbol id="c_list" viewBox="0 0 24 24" shape-rendering="crispEdges"><rect x="3.65" y="4.65" width="17.7" height="14.7" fill="#fff" stroke="#000" stroke-width="1.3"/><rect x="16.5" y="4.5" width="5" height="15" fill="#e0e0e0" stroke="#000" stroke-width="1"/><rect x="5" y="7" width="9" height="1.3" fill="#000"/><rect x="5" y="10.5" width="9" height="1.3" fill="#000"/><rect x="5" y="14" width="9" height="1.3" fill="#000"/><rect x="5" y="17" width="9" height="1.3" fill="#000"/><path d="M17.5,8.5h3l-1.5,-2zM17.5,15.5h3l-1.5,2z" fill="#00008b" stroke="#00008b" stroke-width="0.5" /></symbol><symbol id="c_chklist" viewBox="0 0 24 24" shape-rendering="crispEdges"><rect x="3.65" y="4.65" width="17.7" height="14.7" fill="#fff" stroke="#000" stroke-width="1.3"/><rect x="16.5" y="4.5" width="5" height="15" fill="#e0e0e0" stroke="#000" stroke-width="1"/><rect x="5.45" y="6.45" width="2.1" height="2.1" fill="none" stroke="#000" stroke-width="0.9"/><rect x="9.5" y="7" width="5" height="1.2" fill="#000"/><rect x="5.45" y="10.95" width="2.1" height="2.1" fill="none" stroke="#000" stroke-width="0.9"/><rect x="9.5" y="11.5" width="5" height="1.2" fill="#000"/><rect x="5.45" y="15.45" width="2.1" height="2.1" fill="none" stroke="#000" stroke-width="0.9"/><rect x="9.5" y="16" width="5" height="1.2" fill="#000"/><path d="M17.5,8.5h3l-1.5,-2zM17.5,15.5h3l-1.5,2z" fill="#00008b" stroke="#00008b" stroke-width="0.5" /></symbol><symbol id="c_hscroll" viewBox="0 0 24 24" shape-rendering="crispEdges"><rect x="2" y="8" width="21" height="9" fill="#fff"/><rect x="2" y="16" width="21" height="1.3" fill="#000"/><path d="M7,9v7l-4,-3.5zM17,9v7l4,-3.5z" fill="#000" stroke="none" stroke-width="0" /><rect x="8" y="9" width="1" height="8" fill="#000"/><rect x="11.5" y="9" width="1.3" height="8" fill="#000"/><rect x="15" y="9" width="1" height="8" fill="#000"/></symbol><symbol id="c_vscroll" viewBox="0 0 24 24" shape-rendering="crispEdges"><rect x="8" y="2" width="9" height="21" fill="#fff"/><rect x="16" y="2" width="1.3" height="21" fill="#000"/><path d="M9,7h6l-3,-4zM9,17h6l-3,4z" fill="#000" stroke="none" stroke-width="0" /><rect x="9" y="8" width="7" height="1" fill="#000"/><rect x="9" y="11.5" width="7" height="1.3" fill="#000"/><rect x="9" y="15.5" width="7" height="1" fill="#000"/></symbol><symbol id="c_progress" viewBox="0 0 24 24" shape-rendering="crispEdges"><rect x="3" y="9" width="18" height="7" fill="#fff"/><rect x="3" y="8" width="18" height="1" fill="#808080"/><rect x="3" y="8" width="1" height="8" fill="#808080"/><rect x="5" y="10" width="2.3" height="4.5" fill="#00008b"/><rect x="8" y="10" width="2.3" height="4.5" fill="#00008b"/><rect x="11" y="10" width="2.3" height="4.5" fill="#00008b"/><rect x="14" y="10" width="2.3" height="4.5" fill="#00008b"/></symbol><symbol id="c_slider" viewBox="0 0 24 24" shape-rendering="crispEdges"><rect x="5" y="9" width="14" height="2" fill="#000"/><path d="M4,9h3v5l-1.5,2l-1.5,-2z" fill="#000" stroke="#000" stroke-width="0.5" /><rect x="4" y="18" width="1.3" height="1.3" fill="#000"/><rect x="7" y="18" width="1.3" height="1.3" fill="#000"/><rect x="10" y="18" width="1.3" height="1.3" fill="#000"/><rect x="13" y="18" width="1.3" height="1.3" fill="#000"/><rect x="16" y="18" width="1.3" height="1.3" fill="#000"/><rect x="19" y="18" width="1.3" height="1.3" fill="#000"/></symbol><symbol id="c_tab" viewBox="0 0 24 24" shape-rendering="crispEdges"><rect x="4" y="6" width="16" height="13" fill="#fff"/><rect x="4" y="19" width="17" height="1.5" fill="#000"/><rect x="20" y="7" width="1.5" height="13" fill="#000"/><rect x="4" y="6" width="1" height="13" fill="#fff"/><rect x="5" y="6" width="1.5" height="1" fill="#00008b"/><rect x="7.5" y="6" width="1.5" height="1" fill="#00a0a0"/><rect x="10" y="4" width="1" height="3" fill="#000"/><rect x="12" y="6" width="3" height="1" fill="#808080"/><rect x="17" y="6" width="2" height="1" fill="#808080"/></symbol><symbol id="c_film" viewBox="0 0 24 24" shape-rendering="crispEdges"><rect x="6" y="3" width="2" height="19" fill="#5070a8"/><rect x="15" y="6" width="2" height="16" fill="#5070a8"/><rect x="8.9" y="6.4" width="5.2" height="12.2" fill="#f8f8f8" stroke="#a0b0c8" stroke-width="0.8"/><path d="M9,3h5l3,3" fill="none" stroke="#8090b0" stroke-width="1" /><rect x="11" y="12" width="1.5" height="5" fill="#3050a0"/><rect x="10" y="8" width="3" height="1" fill="#3050a0"/></symbol><symbol id="c_ext" viewBox="0 0 24 24" shape-rendering="crispEdges"><rect x="3.75" y="4.75" width="17.5" height="13.5" fill="#fff" stroke="#000" stroke-width="1.5"/><rect x="4" y="5" width="17" height="2.5" fill="#000"/><rect x="5" y="5.6" width="10" height="1.2" fill="#fff"/><circle cx="12" cy="15" r="4.5" fill="#fff" stroke="#000" stroke-width="1" shape-rendering="auto"/><path d="M10,17l4,-3" fill="none" stroke="#000" stroke-width="1" /><rect x="4" y="10" width="3" height="1.3" fill="#000"/></symbol><symbol id="c_cal" viewBox="0 0 24 24" shape-rendering="crispEdges"><rect x="2.6" y="4.6" width="18.8" height="14.8" fill="#fff" stroke="#909090" stroke-width="1.2"/><rect x="3" y="5" width="18" height="3.5" fill="#e0e0e0"/><rect x="7" y="6" width="6" height="1.2" fill="#00008b"/><rect x="5" y="11" width="2.2" height="1.2" fill="#00008b"/><rect x="9" y="11" width="2.2" height="1.2" fill="#00008b"/><rect x="13" y="11" width="2.2" height="1.2" fill="#909090"/><rect x="17" y="11" width="2.2" height="1.2" fill="#00008b"/><rect x="5" y="14" width="2.2" height="1.2" fill="#e00000"/><rect x="9" y="14" width="2.2" height="1.2" fill="#909090"/><rect x="13" y="14" width="2.2" height="1.2" fill="#00008b"/><rect x="17" y="14" width="2.2" height="1.2" fill="#909090"/><rect x="5" y="17" width="2.2" height="1.2" fill="#e00000"/><rect x="9" y="17" width="2.2" height="1.2" fill="#00008b"/><rect x="13" y="17" width="2.2" height="1.2" fill="#909090"/><rect x="17" y="17" width="2.2" height="1.2" fill="#909090"/></symbol><symbol id="c_drive" viewBox="0 0 24 24"><rect x="3" y="7" width="18" height="10" rx="2" fill="#fff" stroke="#000" stroke-width="1.4"/><rect x="6" y="10" width="4" height="1.2" fill="#00a0a0"/><rect x="16" y="10" width="2.5" height="1.2" fill="#e8e000"/><rect x="6" y="13" width="12" height="1" fill="#808080"/></symbol><symbol id="c_dir" viewBox="0 0 24 24"><path d="M3,19v-12l2,-2h5l2,2h8v12z" fill="#f8f040" stroke="#908030" stroke-width="1" /><rect x="3" y="19" width="18" height="1.2" fill="#606060"/><text x="5.5" y="16.5" font-size="8" font-weight="bold" fill="#905010" font-family="Liberation Sans">DIR</text></symbol><symbol id="c_file" viewBox="0 0 24 24" shape-rendering="crispEdges"><path d="M5,3h10l3.5,3.5v14.5h-13.5z" fill="#fff" stroke="#000" stroke-width="1.3" /><rect x="7.5" y="7" width="6" height="1.2" fill="#00008b"/><rect x="7.5" y="9.5" width="8" height="1.2" fill="#00008b"/><rect x="7.5" y="12" width="6" height="1.2" fill="#00008b"/><rect x="7.5" y="14.5" width="8" height="1.2" fill="#00008b"/><rect x="7.5" y="17" width="7" height="1.2" fill="#00008b"/></symbol><symbol id="c_color" viewBox="0 0 24 24" shape-rendering="crispEdges"><rect x="2.5" y="7.5" width="19" height="13" fill="#fff" stroke="#808080" stroke-width="1"/><rect x="2" y="3" width="12" height="4" fill="#000"/><rect x="3" y="4" width="5" height="2.5" fill="#0000ff"/><rect x="2" y="20.5" width="20" height="1.2" fill="#000"/><rect x="5" y="9.0" width="2.2" height="2.2" fill="#00008b"/><rect x="8" y="9.0" width="2.2" height="2.2" fill="#0000ff"/><rect x="11" y="9.0" width="2.2" height="2.2" fill="#f0f"/><rect x="14" y="9.0" width="2.2" height="2.2" fill="#0e0"/><rect x="17" y="9.0" width="2.2" height="2.2" fill="#e00"/><rect x="5" y="12.6" width="2.2" height="2.2" fill="#088"/><rect x="8" y="12.6" width="2.2" height="2.2" fill="#808"/><rect x="11" y="12.6" width="2.2" height="2.2" fill="#8cf"/><rect x="14" y="12.6" width="2.2" height="2.2" fill="#800"/><rect x="17" y="12.6" width="2.2" height="2.2" fill="#e00"/><rect x="5" y="16.2" width="2.2" height="2.2" fill="#e08"/><rect x="8" y="16.2" width="2.2" height="2.2" fill="#ee0"/><rect x="11" y="16.2" width="2.2" height="2.2" fill="#080"/><rect x="14" y="16.2" width="2.2" height="2.2" fill="#0cf"/><rect x="17" y="16.2" width="2.2" height="2.2" fill="#80e"/></symbol><symbol id="c_net" viewBox="0 0 24 24"><circle cx="10" cy="8" r="6" fill="#1030e0" stroke="#909090" stroke-width="1"/><path d="M6,5q3,-3 7,-1q1,3 -2,4q-3,2 -5,0z" fill="#20c030"/><rect x="12.5" y="11.5" width="8" height="6" fill="#e0e0e0" stroke="#000" stroke-width="1"/><rect x="14" y="12.5" width="5" height="3.5" fill="#008080"/><rect x="11" y="19" width="11" height="2" fill="#c0c0c0"/><rect x="11" y="20.5" width="11" height="1" fill="#000"/><path d="M2,20h5M4,20v-6M2,16l2,-2.5l2,2.5" fill="none" stroke="#00008b" stroke-width="1.6" /></symbol><symbol id="c_updown" viewBox="0 0 24 24" shape-rendering="crispEdges"><rect x="10" y="5" width="1.5" height="15" fill="#000"/><rect x="5" y="19" width="6" height="1.5" fill="#000"/><rect x="6" y="5" width="5" height="1.2" fill="#808080"/><path d="M3,12l3,-6v12z" fill="#fff" stroke="none" stroke-width="0" /><rect x="13.0" y="5.5" width="6" height="14" fill="#fff" stroke="#c0c0c0" stroke-width="1"/><path d="M13.5,10.5h5l-2.5,-3.5z" fill="#0000ff" stroke="none" stroke-width="0" /><path d="M13.5,14.5h5l-2.5,3.5z" fill="#000" stroke="none" stroke-width="0" /></symbol><symbol id="c_win" viewBox="0 0 24 24" shape-rendering="crispEdges"><rect x="3.1" y="4.6" width="17.8" height="14.8" fill="#fff" stroke="#00008b" stroke-width="1.2"/><rect x="3" y="4.5" width="18" height="3.5" fill="#00008b"/><rect x="15" y="5.5" width="2" height="1" fill="#fff"/><rect x="18" y="5.5" width="2" height="1" fill="#fff"/><rect x="5.6" y="10.6" width="3.3" height="6.8" fill="#f0e000" stroke="#00008b" stroke-width="1.2"/><rect x="11.6" y="10.6" width="3.3" height="6.8" fill="#f0e000" stroke="#00008b" stroke-width="1.2"/><rect x="17.5" y="10" width="2" height="2" fill="#404040"/><rect x="17.5" y="14" width="2" height="2" fill="#404040"/></symbol><symbol id="c_timer" viewBox="0 0 24 24"><circle cx="12" cy="14" r="8" fill="#fff" stroke="#000" stroke-width="1.3"/><circle cx="12" cy="14" r="5.8" fill="none" stroke="#000" stroke-width=".8" stroke-dasharray="1 1.5"/><rect x="10" y="2" width="4" height="2" fill="#00008b"/><rect x="11" y="4" width="2" height="2" fill="#000"/><path d="M12,14l3,-3M12,14l3,2" fill="none" stroke="#000" stroke-width="1" /><path d="M5,7l1.5,1.5M19,7l-1.5,1.5" fill="none" stroke="#000" stroke-width="1.3" /></symbol><symbol id="c_print" viewBox="0 0 24 24"><path d="M7,9l2,-5h9l-2,5" fill="#fff" stroke="#000" stroke-width="1.1" /><path d="M3,10q0,-1.5 2,-1.5h14q2,0 2,1.5v5q0,2 -3,3h-12q-3,-1 -3,-3z" fill="#fff" stroke="#000" stroke-width="1.3"/><rect x="3.5" y="13" width="17" height="1.3" fill="#000"/><rect x="6" y="16" width="12" height="1.2" fill="#000"/><rect x="11" y="14.5" width="2" height="1.5" fill="#e00000"/><rect x="13" y="14.5" width="2" height="1.5" fill="#0000ff"/></symbol><symbol id="c_net2" viewBox="0 0 24 24" shape-rendering="crispEdges"><rect x="2.5" y="2.5" width="8" height="6" fill="#e8e8e8" stroke="#000" stroke-width="1"/><rect x="4" y="3.5" width="5" height="3.5" fill="#808080"/><rect x="1" y="9.5" width="11" height="1.5" fill="#d0d0d0"/><rect x="1" y="11" width="11" height="1" fill="#000"/><rect x="13.5" y="12.5" width="8" height="6" fill="#e8e8e8" stroke="#000" stroke-width="1"/><rect x="15" y="13.5" width="5" height="3.5" fill="#808080"/><rect x="12" y="19.5" width="11" height="1.5" fill="#d0d0d0"/><rect x="12" y="21" width="11" height="1" fill="#000"/><path d="M19,9v-4h-5M16,3l-2.5,2l2.5,2" fill="none" stroke="#0000ff" stroke-width="1.5" /><path d="M5,13v5h5M8,16l2.5,2l-2.5,2" fill="none" stroke="#0000ff" stroke-width="1.5" /></symbol><symbol id="c_net3" viewBox="0 0 24 24" shape-rendering="crispEdges"><rect x="2.5" y="2.5" width="8" height="6" fill="#e8e8e8" stroke="#000" stroke-width="1"/><rect x="4" y="3.5" width="5" height="3.5" fill="#0000ff"/><rect x="1" y="9.5" width="11" height="1.5" fill="#d0d0d0"/><rect x="1" y="11" width="11" height="1" fill="#000"/><rect x="13.5" y="12.5" width="8" height="6" fill="#e8e8e8" stroke="#000" stroke-width="1"/><rect x="15" y="13.5" width="5" height="3.5" fill="#808080"/><rect x="12" y="19.5" width="11" height="1.5" fill="#d0d0d0"/><rect x="12" y="21" width="11" height="1" fill="#000"/><path d="M5,13v5h5M8,16l2.5,2l-2.5,2" fill="none" stroke="#0000ff" stroke-width="1.5" /></symbol><symbol id="c_pc" viewBox="0 0 24 24" shape-rendering="crispEdges"><rect x="7.5" y="8.5" width="8" height="6" fill="#e8e8e8" stroke="#000" stroke-width="1"/><rect x="9" y="9.5" width="5" height="3.5" fill="#0000ff"/><rect x="6" y="15.5" width="11" height="1.5" fill="#d0d0d0"/><rect x="6" y="17" width="11" height="1" fill="#000"/></symbol><symbol id="c_serial" viewBox="0 0 24 24" shape-rendering="crispEdges"><path d="M4,4h9l-1,5h-7z" fill="#e8e8e8" stroke="#808080" stroke-width="1" /><rect x="4" y="3" width="9" height="1" fill="#00c0c0"/><path d="M8,9v4q0,3 4,3h2q2,0 2,3" fill="none" stroke="#606060" stroke-width="2.2" shape-rendering="auto"/><path d="M14,13h4v-5M16,10l2,-2.5l2,2.5" fill="none" stroke="#00008b" stroke-width="1.3" /></symbol><symbol id="c_grid" viewBox="0 0 24 24" shape-rendering="crispEdges"><rect x="3.65" y="4.65" width="16.7" height="14.7" fill="#fff" stroke="#000" stroke-width="1.3"/><rect x="3" y="4" width="18" height="2" fill="#000"/><rect x="8" y="6" width="1" height="14" fill="#c0c0c0"/><rect x="12.5" y="6" width="1" height="14" fill="#c0c0c0"/><rect x="17" y="6" width="1" height="14" fill="#c0c0c0"/><rect x="4" y="9.5" width="16" height="1" fill="#c0c0c0"/><rect x="4" y="13" width="16" height="1" fill="#c0c0c0"/><rect x="4" y="16.5" width="16" height="1" fill="#c0c0c0"/><rect x="3" y="6" width="2" height="14" fill="#c0c0c0"/><rect x="9.6" y="9.1" width="3.3" height="2.8" fill="#fff" stroke="#0000ff" stroke-width="1.2"/></symbol><symbol id="c_datasrc" viewBox="0 0 24 24" shape-rendering="crispEdges"><rect x="2.65" y="2.65" width="8.2" height="7.2" fill="#e0e0e0" stroke="#000" stroke-width="1.3"/><rect x="12.65" y="2.65" width="8.2" height="7.2" fill="#e0e0e0" stroke="#000" stroke-width="1.3"/><path d="M8.5,3.5v5.5l-3.5,-2.8zM4.5,3.5v5.5" fill="#00008b" stroke="#00008b" stroke-width="1" /><path d="M15,3.5v5.5l3.5,-2.8zM19,3.5v5.5" fill="#00008b" stroke="#00008b" stroke-width="1" /><rect x="7.55" y="13.55" width="12.9" height="2.1" fill="#fff" stroke="#00008b" stroke-width="1.1"/><rect x="7.55" y="18.55" width="12.9" height="2.1" fill="#fff" stroke="#00008b" stroke-width="1.1"/><path d="M4.5,10.5v9h2.5M4.5,14.5h2.5" fill="none" stroke="#00008b" stroke-width="1.1" /></symbol><symbol id="c_db1" viewBox="0 0 24 24"><rect x="4.55" y="2.55" width="14.9" height="2.4" fill="#fff" stroke="#000" stroke-width="1.1"/><rect x="4.55" y="7.55" width="14.9" height="2.4" fill="#fff" stroke="#000" stroke-width="1.1"/><path d="M4,4h-1.5v5h1.5" fill="none" stroke="#000" stroke-width="1" /><path d="M3,19h4M5,19v-5M3,16l2,-2.5l2,2.5" fill="none" stroke="#000" stroke-width="1.5" /><path d="M11,14v6c0,3 7,3 7,0v-6" fill="#a09000" stroke="#000" stroke-width=".9"/><ellipse cx="14.5" cy="14" rx="3.5" ry="2" fill="#a09000" stroke="#000" stroke-width=".9"/></symbol><symbol id="c_db2" viewBox="0 0 24 24"><rect x="4.55" y="2.55" width="14.9" height="2.4" fill="#fff" stroke="#000" stroke-width="1.1"/><rect x="4.55" y="7.55" width="14.9" height="2.4" fill="#fff" stroke="#000" stroke-width="1.1"/><rect x="5.55" y="12.55" width="7.9" height="7.9" fill="#fff" stroke="#000" stroke-width="1.1"/><rect x="7" y="16" width="4" height="1.2" fill="#000"/></symbol><symbol id="c_imgbox" viewBox="0 0 24 24"><rect x="3.5" y="4.5" width="17" height="15" fill="#d8ead8" stroke="#a0a0a0" stroke-width="1"/><path d="M4,19l6,-8l3,3l3,-5l4,6v4z" fill="#c0d8c0" stroke="#406050" stroke-width="0.9" /><circle cx="7.5" cy="8" r="1.6" fill="#f0e060" stroke="#404040" stroke-width=".7"/><path d="M4,19l17,0M4,4v15" fill="none" stroke="#000" stroke-width="1.2" /></symbol><symbol id="c_odbc" viewBox="0 0 24 24"><path d="M3,4v7c0,3 8,3 8,0v-7" fill="#808080" stroke="#000" stroke-width=".9"/><ellipse cx="7.0" cy="4" rx="4.0" ry="2" fill="#808080" stroke="#000" stroke-width=".9"/><path d="M13,4v7c0,3 8,3 8,0v-7" fill="#808080" stroke="#000" stroke-width=".9"/><ellipse cx="17.0" cy="4" rx="4.0" ry="2" fill="#808080" stroke="#000" stroke-width=".9"/><text x="1" y="22" font-size="8.5" font-family="Liberation Serif" textLength="21" lengthAdjust="spacingAndGlyphs">ODBC</text></symbol><symbol id="c_odbc2" viewBox="0 0 24 24"><rect x="4.5" y="1.5" width="13" height="2" fill="#fff" stroke="#000" stroke-width="1"/><path d="M6,8v7c0,3 9,3 9,0v-7" fill="#a09000" stroke="#000" stroke-width=".9"/><ellipse cx="10.5" cy="8" rx="4.5" ry="2" fill="#a09000" stroke="#000" stroke-width=".9"/><text x="1" y="23" font-size="8" font-family="Liberation Serif" textLength="21" lengthAdjust="spacingAndGlyphs">ODBC</text></symbol></defs></svg><div style="left:0px;top:0px;width:1920px;height:22px;background:linear-gradient(180deg,rgba(255,255,255,.10),rgba(255,255,255,0) 60%),linear-gradient(100deg,#5f9577 0,#6a9e82 6%,#5b9072 16%,#68a082 33%,#5a8f70 45%,#578b6d 55%,#619779 68%,#548a6b 82%,#5f9577 92%,#6da186 100%)"></div><div style="left:10px;top:-2px;width:733px;height:24px;background:rgba(255,255,255,.45);filter:blur(5px);border-radius:9px"></div><div style="left:0px;top:0px;width:1920px;height:1px;background:rgba(255,255,255,.25)"></div><div style="left:0px;top:20px;width:1920px;height:1px;background:rgba(255,255,255,.45)"></div><div style="left:0px;top:21px;width:1920px;height:1px;background:#3e6450"></div><svg style="left:0px;top:3px" width="16" height="16"><use href="#logo_red"/></svg><span class="t" style="left:21px;top:3px;font-size:12.3px;line-height:16px;color:#000;letter-spacing:.2px"><a>海</a><a>风</a><a>文</a><a>件</a><a>传</a><a>送</a><a>服</a><a>务</a><a>端</a> - d:\Desktop\<a>网</a><a>络</a><a>相</a><a>关</a>\<a>易</a><a>语</a><a>言</a><a>超</a><a>大</a><a>文</a><a>件</a><a>传</a><a>输</a><a>源</a><a>码</a>\<a>文</a><a>件</a><a>传</a><a>送</a><a>服</a><a>务</a><a>器</a>_1.e - Windows<a>窗</a><a>口</a><a>程</a><a>序</a> - [<a>窗</a><a>口</a>: _<a>启</a><a>动</a><a>窗</a><a>口</a>]</span><div style="left:1813px;top:-1px;width:104px;height:19px;border:1px solid rgba(30,30,30,.7);border-top:none;border-radius:0 0 5px 5px;overflow:hidden;box-shadow:0 0 0 1px rgba(255,255,255,.35),0 1px 7px 2px rgba(255,255,255,.28)"><div style="left:0px;top:0px;width:29px;height:18px;background:linear-gradient(rgba(255,255,255,.66) 0,rgba(255,255,255,.5) 45%,rgba(255,255,255,.16) 50%,rgba(255,255,255,.3) 100%);border-right:1px solid rgba(40,40,40,.55);box-shadow:inset 1px 0 rgba(255,255,255,.35)"><svg style="left:7px;top:3px" width="14" height="12"><use href="#aero_min"/></svg></div><div style="left:29px;top:0px;width:26px;height:18px;background:linear-gradient(rgba(255,255,255,.66) 0,rgba(255,255,255,.5) 45%,rgba(255,255,255,.16) 50%,rgba(255,255,255,.3) 100%);border-right:1px solid rgba(40,40,40,.55);box-shadow:inset 1px 0 rgba(255,255,255,.35)"><svg style="left:6px;top:3px" width="14" height="12"><use href="#aero_max2"/></svg></div><div style="left:55px;top:0px;width:48px;height:18px;background:linear-gradient(#e9a99a 0,#d6715b 45%,#c03a20 50%,#c9492f 80%,#e08a6a 100%);border-right:1px solid rgba(40,40,40,.55);box-shadow:inset 1px 0 rgba(255,255,255,.35)"><svg style="left:17px;top:3px" width="14" height="12"><use href="#aero_close"/></svg></div></div><div style="left:0px;top:22px;width:1920px;height:1018px;background:#f0f0f0;overflow:hidden"><div style="left:0px;top:0px;width:1920px;height:2px;background:#fff"></div><div style="left:2px;top:3px;width:3px;height:23px;border-left:1px solid #fff;border-right:1px solid #a0a0a0"></div><svg style="left:10px;top:5px" width="16" height="16"><use href="#logo_blue"/></svg><span class="t" style="left:30px;top:11px;"><u>F</u>.<a>程</a><a>序</a></span><span class="t" style="left:74px;top:11px;"><u>E</u>.<a>编</a><a>辑</a></span><span class="t" style="left:118px;top:11px;"><u>V</u>.<a>查</a><a>看</a></span><span class="t" style="left:163px;top:11px;"><u>I</u>.<a>插</a><a>入</a></span><span class="t" style="left:204px;top:11px;"><u>B</u>.<a>数</a><a>据</a><a>库</a></span><span class="t" style="left:261px;top:11px;"><u>R</u>.<a>运</a><a>行</a></span><span class="t" style="left:306px;top:11px;"><u>C</u>.<a>编</a><a>译</a></span><span class="t" style="left:351px;top:11px;"><u>T</u>.<a>工</a><a>具</a></span><span class="t" style="left:395px;top:11px;"><u>W</u>.<a>窗</a><a>口</a></span><span class="t" style="left:444px;top:11px;"><u>H</u>.<a>帮</a><a>助</a></span><span class="t" style="left:562px;top:8px;"><a>模</a><a>块</a></span><span class="t" style="left:603px;top:8px;"><a>支</a><a>持</a><a>库</a></span><span class="t" style="left:658px;top:8px;"><a>静</a><a>编</a></span><span class="t" style="left:706px;top:8px;"><a>便</a><a>签</a></span><span class="t" style="left:753px;top:8px;"><a>词</a><a>库</a></span><span class="t" style="left:819px;top:8px;"><a>设</a><a>置</a></span><svg style="left:792px;top:12px" width="9" height="5"><path d="M0,0h9l-4.5,5z" fill="#000"/></svg><svg style="left:857px;top:12px" width="9" height="5"><path d="M0,0h9l-4.5,5z" fill="#000"/></svg><div class="rb" style="left:1870px;top:10px;width:16px;height:15px;"><svg style="left:0px;top:0px" width="16" height="15"><use href="#cap_min"/></svg></div><div class="rb" style="left:1886px;top:10px;width:16px;height:15px;"><svg style="left:0px;top:0px" width="16" height="15"><use href="#cap_restore"/></svg></div><div class="rb" style="left:1904px;top:10px;width:16px;height:15px;"><svg style="left:0px;top:0px" width="16" height="15"><use href="#cap_close"/></svg></div><div style="left:0px;top:28px;width:1920px;height:1px;background:#a0a0a0"></div><div style="left:0px;top:29px;width:1920px;height:1px;background:#fff"></div><div style="left:2px;top:32px;width:3px;height:18px;border-left:1px solid #fff;border-right:1px solid #a0a0a0"></div><svg style="left:10px;top:32px" width="16" height="16"><use href="#new"/></svg><svg style="left:34px;top:32px" width="16" height="16"><use href="#open"/></svg><svg style="left:56px;top:32px" width="16" height="16"><use href="#save"/></svg><div style="left:79px;top:33px;width:1px;height:16px;background:#a0a0a0"></div><div style="left:80px;top:33px;width:1px;height:16px;background:#fff"></div><svg style="left:88px;top:32px" width="16" height="16"><use href="#cut"/></svg><svg style="left:110px;top:32px" width="16" height="16"><use href="#copy"/></svg><svg style="left:134px;top:32px" width="16" height="16"><use href="#paste"/></svg><svg style="left:156px;top:32px" width="16" height="16"><use href="#redo"/></svg><svg style="left:180px;top:32px" width="16" height="16"><use href="#undo"/></svg><div style="left:202px;top:33px;width:1px;height:16px;background:#a0a0a0"></div><div style="left:203px;top:33px;width:1px;height:16px;background:#fff"></div><svg style="left:210px;top:32px" width="16" height="16"><use href="#find"/></svg><div style="left:233px;top:33px;width:1px;height:16px;background:#a0a0a0"></div><div style="left:234px;top:33px;width:1px;height:16px;background:#fff"></div><div style="left:238px;top:31px;width:23px;height:20px;background:#f8f8f8;border:1px solid;border-color:#a0a0a0 #fff #fff #a0a0a0"></div><svg style="left:242px;top:32px" width="16" height="16"><use href="#lay1"/></svg><div style="left:261px;top:31px;width:23px;height:20px;background:#f8f8f8;border:1px solid;border-color:#a0a0a0 #fff #fff #a0a0a0"></div><svg style="left:264px;top:32px" width="16" height="16"><use href="#lay2"/></svg><svg style="left:288px;top:32px" width="16" height="16"><use href="#lay3"/></svg><div style="left:310px;top:33px;width:1px;height:16px;background:#a0a0a0"></div><div style="left:311px;top:33px;width:1px;height:16px;background:#fff"></div><svg style="left:318px;top:32px" width="16" height="16"><use href="#run"/></svg><svg style="left:342px;top:32px" width="16" height="16"><use href="#stop"/></svg><svg style="left:364px;top:32px" width="16" height="16"><use href="#dbg1"/></svg><svg style="left:388px;top:32px" width="16" height="16"><use href="#dbg2"/></svg><svg style="left:410px;top:32px" width="16" height="16"><use href="#dbg3"/></svg><svg style="left:434px;top:32px" width="16" height="16"><use href="#dbg4"/></svg><svg style="left:456px;top:32px" width="16" height="16"><use href="#dbg5"/></svg><svg style="left:480px;top:32px" width="16" height="16"><use href="#hand"/></svg><div style="left:502px;top:33px;width:1px;height:16px;background:#a0a0a0"></div><div style="left:503px;top:33px;width:1px;height:16px;background:#fff"></div><svg style="left:510px;top:32px" width="16" height="16"><use href="#bino"/></svg><div style="left:530px;top:31px;width:1px;height:20px;background:#a0a0a0"></div><div style="left:531px;top:31px;width:1px;height:20px;background:#fff"></div><div style="left:0px;top:51px;width:531px;height:1px;background:#a0a0a0"></div><div style="left:0px;top:52px;width:531px;height:1px;background:#fff"></div><div style="left:2px;top:55px;width:3px;height:18px;border-left:1px solid #fff;border-right:1px solid #a0a0a0"></div><svg style="left:10px;top:55px" width="16" height="16"><use href="#form"/></svg><div style="left:33px;top:56px;width:1px;height:16px;background:#a0a0a0"></div><div style="left:34px;top:56px;width:1px;height:16px;background:#fff"></div><svg style="left:42px;top:55px" width="16" height="16"><use href="#al1"/></svg><svg style="left:64px;top:55px" width="16" height="16"><use href="#al2"/></svg><svg style="left:88px;top:55px" width="16" height="16"><use href="#al3"/></svg><svg style="left:110px;top:55px" width="16" height="16"><use href="#al4"/></svg><div style="left:133px;top:56px;width:1px;height:16px;background:#a0a0a0"></div><div style="left:134px;top:56px;width:1px;height:16px;background:#fff"></div><svg style="left:142px;top:55px" width="16" height="16"><use href="#al5"/></svg><svg style="left:164px;top:55px" width="16" height="16"><use href="#al6"/></svg><svg style="left:188px;top:55px" width="16" height="16"><use href="#al7"/></svg><svg style="left:210px;top:55px" width="16" height="16"><use href="#al8"/></svg><svg style="left:234px;top:55px" width="16" height="16"><use href="#al9"/></svg><svg style="left:256px;top:55px" width="16" height="16"><use href="#al10"/></svg><div style="left:279px;top:56px;width:1px;height:16px;background:#a0a0a0"></div><div style="left:280px;top:56px;width:1px;height:16px;background:#fff"></div><svg style="left:288px;top:55px" width="16" height="16"><use href="#sz1"/></svg><svg style="left:310px;top:55px" width="16" height="16"><use href="#sz2"/></svg><svg style="left:334px;top:55px" width="16" height="16"><use href="#sz3"/></svg><div style="left:353px;top:54px;width:1px;height:20px;background:#a0a0a0"></div><div style="left:354px;top:54px;width:1px;height:20px;background:#fff"></div><div style="left:0px;top:74px;width:1920px;height:1px;background:#a0a0a0"></div><div style="left:0px;top:75px;width:1920px;height:1px;background:#fff"></div><div style="left:4px;top:83px;width:215px;height:2px;background:#fff"></div><div style="left:4px;top:85px;width:215px;height:1px;background:#a0a0a0"></div><div class="rb1" style="left:222px;top:79px;width:11px;height:11px;"><svg style="left:0px;top:0px" width="9" height="9"><use href="#sm_float"/></svg></div><div class="rb1" style="left:236px;top:79px;width:11px;height:11px;"><svg style="left:0px;top:0px" width="9" height="9"><use href="#sm_close"/></svg></div><div style="left:5px;top:95px;width:242px;height:618px;border:1px solid;border-color:#fff #a0a0a0 #a0a0a0 #fff"></div><div style="left:8px;top:98px;width:236px;height:611px;border:2px solid;border-color:#696969 #fff #fff #696969;background:#fff;overflow:hidden"><div style="left:0px;top:1px;width:230px;height:200px;"><svg style="left:1px;top:-1px" width="16" height="16"><use href="#t_root"/></svg><span class="t" style="left:21px;top:0px;"><a>程</a><a>序</a><a>数</a><a>据</a></span><div style="left:8px;top:15px;width:1px;height:121px;background:repeating-linear-gradient(#808080 0 1px,transparent 1px 2px)"></div><div style="left:9px;top:23px;width:11px;height:1px;background:repeating-linear-gradient(90deg,#808080 0 1px,transparent 1px 2px)"></div><div style="left:4px;top:19px;width:9px;height:9px;background:#fff;border:1px solid #808080"><i style="position:absolute;left:1px;top:3px;width:5px;height:1px;background:#000"></i><i style="position:absolute;left:3px;top:1px;width:1px;height:5px;background:#000"></i></div><svg style="left:20px;top:15px" width="16" height="16"><use href="#t_set"/></svg><div style="left:38px;top:16px;width:70px;height:16px;background:#f0f0f0"></div><span class="t" style="left:40px;top:17px;"><a>窗</a><a>口</a><a>程</a><a>序</a><a>集</a><span class="s6">1</span></span><div style="left:9px;top:39px;width:11px;height:1px;background:repeating-linear-gradient(90deg,#808080 0 1px,transparent 1px 2px)"></div><div style="left:4px;top:35px;width:9px;height:9px;background:#fff;border:1px solid #808080"><i style="position:absolute;left:1px;top:3px;width:5px;height:1px;background:#000"></i><i style="position:absolute;left:3px;top:1px;width:1px;height:5px;background:#000"></i></div><svg style="left:20px;top:31px" width="16" height="16"><use href="#t_set"/></svg><span class="t" style="left:40px;top:33px;"><a>文</a><a>件</a><a>传</a><a>送</a></span><div style="left:9px;top:55px;width:11px;height:1px;background:repeating-linear-gradient(90deg,#808080 0 1px,transparent 1px 2px)"></div><div style="left:4px;top:51px;width:9px;height:9px;background:#fff;border:1px solid #808080"><i style="position:absolute;left:1px;top:3px;width:5px;height:1px;background:#000"></i><i style="position:absolute;left:3px;top:1px;width:1px;height:5px;background:#000"></i></div><svg style="left:20px;top:47px" width="16" height="16"><use href="#t_dll"/></svg><span class="t" style="left:40px;top:49px;"><span class="s6">Dll</span><a>命</a><a>令</a></span><div style="left:9px;top:71px;width:11px;height:1px;background:repeating-linear-gradient(90deg,#808080 0 1px,transparent 1px 2px)"></div><div style="left:4px;top:67px;width:9px;height:9px;background:#fff;border:1px solid #808080"><i style="position:absolute;left:1px;top:3px;width:5px;height:1px;background:#000"></i><i style="position:absolute;left:3px;top:1px;width:1px;height:5px;background:#000"></i></div><svg style="left:20px;top:63px" width="16" height="16"><use href="#t_win"/></svg><span class="t" style="left:40px;top:65px;"><a>窗</a><a>口</a></span><div style="left:9px;top:87px;width:11px;height:1px;background:repeating-linear-gradient(90deg,#808080 0 1px,transparent 1px 2px)"></div><svg style="left:20px;top:79px" width="16" height="16"><use href="#t_const"/></svg><span class="t" style="left:40px;top:81px;"><a>常</a><a>量</a><a>表</a><span class="s6">...</span></span><div style="left:9px;top:103px;width:11px;height:1px;background:repeating-linear-gradient(90deg,#808080 0 1px,transparent 1px 2px)"></div><div style="left:4px;top:99px;width:9px;height:9px;background:#fff;border:1px solid #808080"><i style="position:absolute;left:1px;top:3px;width:5px;height:1px;background:#000"></i><i style="position:absolute;left:3px;top:1px;width:1px;height:5px;background:#000"></i></div><svg style="left:20px;top:95px" width="16" height="16"><use href="#t_res"/></svg><span class="t" style="left:40px;top:97px;"><a>资</a><a>源</a><a>表</a></span><div style="left:9px;top:119px;width:11px;height:1px;background:repeating-linear-gradient(90deg,#808080 0 1px,transparent 1px 2px)"></div><svg style="left:20px;top:111px" width="16" height="16"><use href="#t_mod"/></svg><span class="t" style="left:40px;top:113px;"><a>模</a><a>块</a><a>引</a><a>用</a><a>表</a></span><div style="left:9px;top:135px;width:11px;height:1px;background:repeating-linear-gradient(90deg,#808080 0 1px,transparent 1px 2px)"></div><svg style="left:20px;top:127px" width="16" height="16"><use href="#t_ext"/></svg><span class="t" style="left:40px;top:129px;"><a>外</a><a>部</a><a>文</a><a>件</a><a>记</a><a>录</a><a>表</a></span></div></div><div style="left:7px;top:713px;width:68px;height:19px;border:1px solid;border-color:transparent #696969 #696969 #fff;border-radius:0 0 3px 3px"></div><svg style="left:13px;top:714px" width="16" height="16"><use href="#tab_lib"/></svg><span class="t" style="left:33px;top:716px;"><a>支</a><a>持</a><a>库</a></span><div style="left:75px;top:712px;width:59px;height:22px;background:#f0f0f0;border:1px solid;border-color:transparent #696969 #696969 #fff;border-radius:0 0 3px 3px;box-shadow:inset -1px -1px #a0a0a0"></div><svg style="left:81px;top:717px" width="16" height="16"><use href="#tab_prog"/></svg><span class="t" style="left:104px;top:717px;"><a>程</a><a>序</a></span><div style="left:135px;top:713px;width:57px;height:19px;border:1px solid;border-color:transparent #696969 #696969 #696969;border-radius:0 0 3px 3px"></div><svg style="left:140px;top:714px" width="16" height="16"><use href="#tab_prop"/></svg><span class="t" style="left:163px;top:715px;"><a>属</a><a>性</a></span><div style="left:250px;top:76px;width:2px;height:658px;background:#fff"></div><div style="left:254px;top:76px;width:1px;height:658px;background:#7a7a7a"></div><div style="left:255px;top:75px;width:1531px;height:637px;background:#2b2f3a;overflow:hidden"><div style="left:4px;top:4px;width:7px;height:7px;border:1px solid #fff"></div><div style="left:4px;top:45px;width:7px;height:7px;border:1px solid #fff"></div><div style="left:4px;top:86px;width:7px;height:7px;border:1px solid #fff"></div><div style="left:272px;top:4px;width:7px;height:7px;border:1px solid #fff"></div><div style="left:272px;top:86px;width:7px;height:7px;background:#00008b;border:1px solid #fff"></div><div style="left:541px;top:4px;width:7px;height:7px;border:1px solid #fff"></div><div style="left:541px;top:45px;width:7px;height:7px;background:#00008b;border:1px solid #fff"></div><div style="left:541px;top:86px;width:7px;height:7px;background:#00008b;border:1px solid #fff"></div><div style="left:12px;top:12px;width:528px;height:73px;"><div style="left:0px;top:0px;width:528px;height:24px;background:linear-gradient(#98b3d5,#b9d1ea);border-radius:5px 5px 0 0"></div><span class="t" style="left:6px;top:5px;color:#1e1e1e"><a>海</a><a>风</a><a>文</a><a>件</a><a>传</a><a>送</a><a>服</a><a>务</a><a>端</a></span><div style="left:493px;top:5px;width:31px;height:16px;background:linear-gradient(#e3a99c,#c8513c 45%,#b5311c 55%,#d77d63);border:1px solid #5a2b22;border-radius:3px;box-shadow:inset 0 0 0 1px rgba(255,255,255,.45)"><svg style="left:9px;top:2px" width="12" height="10"><path d="M1.5,1.5L10.5,8.5M10.5,1.5L1.5,8.5" stroke="#5a2b22" stroke-width="4" stroke-linecap="square"/><path d="M1.5,1.5L10.5,8.5M10.5,1.5L1.5,8.5" stroke="#fff" stroke-width="2.2" stroke-linecap="square"/></svg></div><div style="left:0px;top:24px;width:528px;height:49px;background-color:#f0f0f0;background-image:linear-gradient(90deg,transparent 1px,#f0f0f0 1px),linear-gradient(#000 1px,#f0f0f0 1px);background-size:8px 8px;background-position:1px 0;border:1px solid;border-top:none;border-color:#f0f0f0 #bcd9f2 #3cc6ee #dfeaf6;overflow:hidden"><div style="left:9px;top:13px;width:58px;height:16px;background:#f0f0f0;white-space:nowrap;font-size:12px;line-height:16px;padding-left:0px;overflow:hidden"><a>服</a><a>务</a><a>端</a><a>口</a>:</div><div style="left:73px;top:8px;width:56px;height:24px;background:#fff;border:2px solid;border-color:#696969 #fff #fff #696969;box-shadow:inset 0 0 0 0 #000;text-align:center;line-height:20px;font-size:12px"><span class="s6">9119</span></div><div style="left:144px;top:13px;width:118px;height:16px;background:#f0f0f0;white-space:nowrap;font-size:12px;line-height:16px;padding-left:0px;overflow:hidden"><a>分</a><a>块</a><a>大</a><a>小</a><a>（</a><span style="display:inline-block;width:12px;text-align:center">×</span><span class="s6">64KB</span><a>）</a><span class="s6">:</span></div><div style="left:273px;top:8px;width:56px;height:24px;background:#fff;border:2px solid;border-color:#696969 #fff #fff #696969;box-shadow:inset 0 0 0 0 #000;text-align:center;line-height:20px;font-size:12px"><span class="s6">64</span></div><div style="left:353px;top:8px;width:72px;height:33px;background:#f0f0f0;border:1px solid;border-color:#fff #000 #000 #fff;box-shadow:inset -1px -1px #a0a0a0;text-align:center;line-height:31px;font-size:12px"><a>开</a><a>启</a></div><div style="left:441px;top:8px;width:72px;height:33px;background:#f0f0f0;border:1px solid;border-color:#fff #000 #000 #fff;box-shadow:inset -1px -1px #a0a0a0;text-align:center;line-height:31px;font-size:12px"><a>停</a><a>止</a></div></div></div></div><div style="left:255px;top:712px;width:1531px;height:1px;background:#d8d8d8"></div><div style="left:255px;top:713px;width:1531px;height:1px;background:#fff"></div><div style="left:255px;top:714px;width:1532px;height:20px;overflow:hidden"><svg style="left:0;top:0" width="400" height="20"><path d="M2,2L9,19H95M87,2L95,19H300" fill="none" stroke="#000" stroke-width="1"/></svg><span class="t" style="left:14px;top:3px;"><a>窗</a><a>口</a><a>程</a><a>序</a><a>集</a><span class="s6">1</span></span><span class="t" style="left:102px;top:3px;color:#808000"><span class="s6">[Dll</span><a>命</a><a>令</a><a>定</a><a>义</a><a>表</a><span class="s6">]</span></span></div><div style="left:1786px;top:75px;width:2px;height:659px;background:#fff"></div><div style="left:1791px;top:76px;width:1px;height:658px;background:#a0a0a0"></div><div style="left:1792px;top:83px;width:78px;height:2px;background:#fff"></div><div style="left:1792px;top:85px;width:78px;height:1px;background:#a0a0a0"></div><div class="rb1" style="left:1874px;top:79px;width:11px;height:11px;"><svg style="left:0px;top:0px" width="9" height="9"><use href="#sm_menu"/></svg></div><div class="rb1" style="left:1887px;top:79px;width:11px;height:11px;"><svg style="left:0px;top:0px" width="9" height="9"><use href="#sm_float"/></svg></div><div class="rb1" style="left:1900px;top:79px;width:11px;height:11px;"><svg style="left:0px;top:0px" width="9" height="9"><use href="#sm_close"/></svg></div><div style="left:1798px;top:96px;width:116px;height:19px;border:1px solid;border-color:#fff #808080 #808080 #fff;box-shadow:inset 1px 1px #fff;text-align:center"><span class="tc"><a>基</a><a>本</a><a>组</a><a>件</a></span></div><div style="left:1798px;top:125px;width:27px;height:27px;border:1px solid;border-color:#000 #fff #fff #000;background:#f6f6f6"></div><svg style="left:1800px;top:127px" width="24" height="24"><use href="#c_arrow"/></svg><svg style="left:1829px;top:127px" width="24" height="24"><use href="#c_edit"/></svg><svg style="left:1858px;top:127px" width="24" height="24"><use href="#c_pic"/></svg><svg style="left:1887px;top:127px" width="24" height="24"><use href="#c_shape"/></svg><svg style="left:1800px;top:156px" width="24" height="24"><use href="#c_draw"/></svg><svg style="left:1829px;top:156px" width="24" height="24"><use href="#c_group"/></svg><svg style="left:1858px;top:156px" width="24" height="24"><use href="#c_label"/></svg><svg style="left:1887px;top:156px" width="24" height="24"><use href="#c_button"/></svg><svg style="left:1800px;top:185px" width="24" height="24"><use href="#c_check"/></svg><svg style="left:1829px;top:185px" width="24" height="24"><use href="#c_radio"/></svg><svg style="left:1858px;top:185px" width="24" height="24"><use href="#c_combo"/></svg><svg style="left:1887px;top:185px" width="24" height="24"><use href="#c_list"/></svg><svg style="left:1800px;top:214px" width="24" height="24"><use href="#c_chklist"/></svg><svg style="left:1829px;top:214px" width="24" height="24"><use href="#c_hscroll"/></svg><svg style="left:1858px;top:214px" width="24" height="24"><use href="#c_vscroll"/></svg><svg style="left:1887px;top:214px" width="24" height="24"><use href="#c_progress"/></svg><svg style="left:1800px;top:243px" width="24" height="24"><use href="#c_slider"/></svg><svg style="left:1829px;top:243px" width="24" height="24"><use href="#c_tab"/></svg><svg style="left:1858px;top:243px" width="24" height="24"><use href="#c_film"/></svg><svg style="left:1887px;top:243px" width="24" height="24"><use href="#c_ext"/></svg><svg style="left:1800px;top:272px" width="24" height="24"><use href="#c_cal"/></svg><svg style="left:1829px;top:272px" width="24" height="24"><use href="#c_drive"/></svg><svg style="left:1858px;top:272px" width="24" height="24"><use href="#c_dir"/></svg><svg style="left:1887px;top:272px" width="24" height="24"><use href="#c_file"/></svg><svg style="left:1800px;top:301px" width="24" height="24"><use href="#c_color"/></svg><svg style="left:1829px;top:301px" width="24" height="24"><use href="#c_net"/></svg><svg style="left:1858px;top:301px" width="24" height="24"><use href="#c_updown"/></svg><svg style="left:1887px;top:301px" width="24" height="24"><use href="#c_win"/></svg><svg style="left:1800px;top:330px" width="24" height="24"><use href="#c_timer"/></svg><svg style="left:1829px;top:330px" width="24" height="24"><use href="#c_print"/></svg><svg style="left:1858px;top:330px" width="24" height="24"><use href="#c_net2"/></svg><svg style="left:1887px;top:330px" width="24" height="24"><use href="#c_net3"/></svg><svg style="left:1800px;top:359px" width="24" height="24"><use href="#c_pc"/></svg><svg style="left:1829px;top:359px" width="24" height="24"><use href="#c_serial"/></svg><svg style="left:1858px;top:359px" width="24" height="24"><use href="#c_grid"/></svg><svg style="left:1887px;top:359px" width="24" height="24"><use href="#c_datasrc"/></svg><svg style="left:1800px;top:388px" width="24" height="24"><use href="#c_db2"/></svg><svg style="left:1829px;top:388px" width="24" height="24"><use href="#c_db1"/></svg><svg style="left:1858px;top:388px" width="24" height="24"><use href="#c_imgbox"/></svg><svg style="left:1887px;top:388px" width="24" height="24"><use href="#c_odbc"/></svg><svg style="left:1800px;top:417px" width="24" height="24"><use href="#c_odbc2"/></svg><div style="left:1798px;top:690px;width:116px;height:19px;border:1px solid;border-color:#fff #808080 #808080 #fff;box-shadow:inset 1px 1px #fff;text-align:center"><span class="tc"><a>扩</a><a>展</a><a>组</a><a>件</a><span class="s6">1</span></span></div><div style="left:1798px;top:711px;width:116px;height:19px;border:1px solid;border-color:#fff #808080 #808080 #fff;box-shadow:inset 1px 1px #fff;text-align:center"><span class="tc"><a>扩</a><a>展</a><a>组</a><a>件</a><span class="s6">2</span></span></div><div style="left:0px;top:734px;width:1920px;height:1px;background:#fff"></div><div style="left:0px;top:739px;width:1920px;height:1px;background:#a0a0a0"></div><div style="left:0px;top:740px;width:1920px;height:1px;background:#fff"></div><div class="rb1" style="left:3px;top:744px;width:11px;height:11px;"><svg style="left:0px;top:0px" width="9" height="9"><use href="#sm_close"/></svg></div><div class="rb1" style="left:3px;top:757px;width:11px;height:11px;"><svg style="left:0px;top:0px" width="9" height="9"><use href="#sm_float"/></svg></div><div style="left:9px;top:772px;width:1px;height:232px;background:#a0a0a0"></div><div style="left:10px;top:772px;width:1px;height:232px;background:#fff"></div><div style="left:21px;top:746px;width:56px;height:18px;border:1px solid;border-color:#fff #a0a0a0 transparent #fff;"></div><svg style="left:28px;top:746px" width="16" height="16"><use href="#o_hint"/></svg><span class="t" style="left:48px;top:748px;"><a>提</a><a>示</a></span><div style="left:77px;top:743px;width:61px;height:23px;background:#f0f0f0;border:1px solid;border-color:#fff #696969 transparent #fff;border-radius:2px 2px 0 0;box-shadow:inset -1px 0 #a0a0a0"></div><svg style="left:85px;top:744px" width="16" height="16"><use href="#o_out"/></svg><span class="t" style="left:106px;top:746px;"><a>输</a><a>出</a></span><div style="left:139px;top:746px;width:67px;height:18px;border:1px solid;border-color:#fff #a0a0a0 transparent #fff;"></div><svg style="left:146px;top:746px" width="16" height="16"><use href="#o_call"/></svg><span class="t" style="left:166px;top:748px;"><a>调</a><a>用</a><a>表</a></span><div style="left:207px;top:746px;width:68px;height:18px;border:1px solid;border-color:#fff #a0a0a0 transparent #fff;"></div><svg style="left:214px;top:746px" width="16" height="16"><use href="#o_watch"/></svg><span class="t" style="left:234px;top:748px;"><a>监</a><a>视</a><a>表</a></span><div style="left:276px;top:746px;width:69px;height:18px;border:1px solid;border-color:#fff #a0a0a0 transparent #fff;"></div><svg style="left:283px;top:746px" width="16" height="16"><use href="#o_var"/></svg><span class="t" style="left:303px;top:748px;"><a>变</a><a>量</a><a>表</a></span><div style="left:346px;top:746px;width:63px;height:18px;border:1px solid;border-color:#fff #a0a0a0 transparent #fff;"></div><svg style="left:353px;top:746px" width="16" height="16"><use href="#o_find"/></svg><span class="t" style="left:373px;top:748px;"><a>搜</a><a>寻</a><span class="s6">1</span></span><div style="left:410px;top:746px;width:64px;height:18px;border:1px solid;border-color:#fff #a0a0a0 transparent #fff;"></div><svg style="left:417px;top:746px" width="16" height="16"><use href="#o_find"/></svg><span class="t" style="left:437px;top:748px;"><a>搜</a><a>寻</a><span class="s6">2</span></span><div style="left:476px;top:746px;width:80px;height:18px;border:1px solid;border-color:#fff #a0a0a0 transparent #fff;"></div><svg style="left:483px;top:746px" width="16" height="16"><use href="#o_clip"/></svg><span class="t" style="left:503px;top:748px;"><a>剪</a><a>辑</a><a>历</a><a>史</a></span><div style="left:19px;top:765px;width:1896px;height:247px;border:1px solid;border-color:#fff #696969 #696969 #fff"></div><div style="left:20px;top:766px;width:1894px;height:245px;border:1px solid;border-color:#fff #a0a0a0 #a0a0a0 #fff"></div><div style="left:22px;top:770px;width:1890px;height:236px;border:1px solid;border-color:#696969 #fff #fff #696969;background:#2b2f3a;overflow:hidden"><svg style="left:3px;top:3px" width="15" height="15"><path d="M7.5,0L15,7.5L7.5,15L0,7.5z" fill="#fff"/></svg><span class="o" style="left:27px;top:2px;"><a>易</a><a>语</a><a>言</a><a>助</a><a>手</a><a>提</a><a>醒</a><a>您</a></span><span class="o m" style="left:155px;top:2px;">:</span><span class="o" style="left:179px;top:2px;"><a>易</a><a>语</a><a>言</a><a>助</a><a>手</a><a>加</a><a>载</a><a>完</a><a>毕</a></span><span class="o m" style="left:323px;top:2px;">!</span><span class="o" style="left:347px;top:2px;"><a>词</a><a>库</a><a>功</a><a>能</a></span><span class="o m" style="left:411px;top:2px;">[</span><span class="o" style="left:419px;top:2px;"><a>关</a><a>闭</a></span><span class="o m" style="left:451px;top:2px;">]</span><span class="o m" style="left:459px;top:2px;">,</span><span class="o" style="left:475px;top:2px;"><a>自</a><a>动</a><a>备</a><a>份</a><a>源</a><a>码</a><a>已</a><a>开</a><a>启</a></span><span class="o m" style="left:619px;top:2px;">,</span><span class="o" style="left:635px;top:2px;"><a>自</a><a>动</a><a>保</a><a>存</a><a>已</a><a>开</a><a>启</a></span><span class="o m" style="left:747px;top:2px;">!</span><span class="o" style="left:771px;top:2px;"><a>当</a><a>前</a><a>易</a><a>版</a><a>本</a></span><span class="o m" style="left:851px;top:2px;">:</span><span class="o m" style="left:867px;top:2px;">5.8</span><span class="o" style="left:907px;top:2px;"><a>当</a><a>前</a><a>系</a><a>统</a></span><span class="o m" style="left:971px;top:2px;">:</span><span class="o m" style="left:987px;top:2px;">Win7</span><svg style="left:3px;top:35px" width="15" height="15"><path d="M7.5,0L15,7.5L7.5,15L0,7.5z" fill="#fff"/></svg><span class="o" style="left:27px;top:34px;"><a>易</a><a>语</a><a>言</a><a>助</a><a>手</a><a>提</a><a>醒</a><a>您</a></span><span class="o m" style="left:155px;top:34px;">:</span><span class="o" style="left:171px;top:34px;"><a>【</a><a>自</a><a>动</a><a>保</a><a>存</a><a>】</a><a>启</a><a>动</a><a>成</a><a>功</a></span><span class="o m" style="left:331px;top:34px;">,</span><span class="o" style="left:347px;top:34px;"><a>时</a><a>间</a><a>周</a><a>期</a><a>为</a></span><span class="o m" style="left:427px;top:34px;">:</span><span class="o m" style="left:443px;top:34px;">300</span><span class="o" style="left:467px;top:34px;"><a>秒</a><a>自</a><a>动</a><a>保</a><a>存</a></span><span class="o m" style="left:547px;top:34px;">1</span><span class="o" style="left:555px;top:34px;"><a>次</a></span><span class="o m" style="left:571px;top:34px;">!</span><svg style="left:3px;top:51px" width="15" height="15"><path d="M7.5,0L15,7.5L7.5,15L0,7.5z" fill="#fff"/></svg><span class="o" style="left:27px;top:50px;"><a>易</a><a>语</a><a>言</a><a>助</a><a>手</a><a>提</a><a>醒</a><a>您</a></span><span class="o m" style="left:155px;top:50px;">:</span><span class="o" style="left:171px;top:50px;"><a>自</a><a>动</a><a>加</a><a>载</a><a>模</a><a>块</a><a>超</a><a>时</a></span><span class="o m" style="left:299px;top:50px;">,</span><span class="o" style="left:315px;top:50px;"><a>模</a><a>块</a></span><span class="o m" style="left:347px;top:50px;">:</span><span class="o m" style="left:363px;top:50px;">25234656</span><span class="o m" style="left:427px;top:50px;">!</span><div style="left:1870px;top:0px;width:18px;height:234px;background:#f0f0f0;border-left:1px solid #fff;border-right:1px solid #fff"></div><svg style="left:1875px;top:7px" width="8" height="4"><path d="M0,4h8l-4,-4z" fill="#a9a9a9"/></svg><svg style="left:1875px;top:223px" width="8" height="4"><path d="M0,0h8l-4,4z" fill="#a9a9a9"/></svg></div></div><div style="left:1920px;top:0px;width:8px;height:60px;background:repeating-linear-gradient(135deg,#b790d6 0 3px,#bd9adb 3px 6px)"></div><div style="left:1920px;top:60px;width:8px;height:69px;background:repeating-linear-gradient(135deg,#dcc6ec 0 3px,#e3d0f0 3px 6px)"></div><div style="left:1920px;top:129px;width:8px;height:919px;background:#fff"></div><div style="left:1900px;top:483px;width:48px;height:48px;border-radius:50%;background:radial-gradient(circle at 40% 30%,#7fe08f,#3fc45a 55%,#2fb44c);border:2px solid #e8e8e8;box-shadow:0 0 0 1px #b0b0b0,-2px 4px 6px rgba(0,0,0,.25);clip-path:inset(-10px 28px -10px -10px)"><span class="t" style="left:4px;top:15px;color:#fff;font-weight:bold;font-size:13px">28</span></div><div style="left:0px;top:1040px;width:1920px;height:8px;background:linear-gradient(#6f9c82,#4e7d62)"></div><div style="left:0px;top:1039px;width:1920px;height:1px;background:#dfe9e3"></div><div style="left:122px;top:1041px;width:159px;height:8px;background:linear-gradient(90deg,#c9d9cf,#9db9a8 40%,#7fa48d);border:1px solid #3f5c4c;border-bottom:none;border-radius:2px 2px 0 0"></div><div style="left:284px;top:1041px;width:159px;height:8px;background:linear-gradient(90deg,#c9d9cf,#9db9a8 40%,#7fa48d);border:1px solid #3f5c4c;border-bottom:none;border-radius:2px 2px 0 0"></div><div style="left:446px;top:1041px;width:159px;height:8px;background:linear-gradient(90deg,#c9d9cf,#9db9a8 40%,#7fa48d);border:1px solid #3f5c4c;border-bottom:none;border-radius:2px 2px 0 0"></div><div style="left:608px;top:1041px;width:159px;height:8px;background:linear-gradient(90deg,#c9d9cf,#9db9a8 40%,#7fa48d);border:1px solid #3f5c4c;border-bottom:none;border-radius:2px 2px 0 0"></div><div style="left:770px;top:1041px;width:159px;height:8px;background:linear-gradient(90deg,#c9d9cf,#9db9a8 40%,#7fa48d);border:1px solid #3f5c4c;border-bottom:none;border-radius:2px 2px 0 0"></div><div style="left:931px;top:1041px;width:159px;height:8px;background:linear-gradient(90deg,#c9d9cf,#9db9a8 40%,#7fa48d);border:1px solid #3f5c4c;border-bottom:none;border-radius:2px 2px 0 0"></div><div style="left:1093px;top:1041px;width:159px;height:8px;background:linear-gradient(90deg,#c9d9cf,#9db9a8 40%,#7fa48d);border:1px solid #3f5c4c;border-bottom:none;border-radius:2px 2px 0 0"></div><div style="left:1255px;top:1041px;width:159px;height:8px;background:linear-gradient(90deg,#c9d9cf,#9db9a8 40%,#7fa48d);border:1px solid #3f5c4c;border-bottom:none;border-radius:2px 2px 0 0"></div><div style="left:1417px;top:1041px;width:156px;height:8px;background:linear-gradient(90deg,#c9d9cf,#9db9a8 40%,#7fa48d);border:1px solid #3f5c4c;border-bottom:none;border-radius:2px 2px 0 0"></div><div style="left:1573px;top:1040px;width:347px;height:8px;background:#4f8063"></div><div style="left:1905px;top:1041px;width:15px;height:7px;background:linear-gradient(90deg,#88a795,#5f8571);border-left:1px solid #2d4a3a"></div><div style="left:10px;top:1042px;width:32px;height:10px;border-radius:50%;background:#7fa0b8;border:1px solid #d0dde8"></div><div style="left:78px;top:1043px;width:14px;height:8px;border-radius:50%;background:#c030c8"></div><div style="left:374px;top:236px;width:1439px;height:758px;border-radius:7px 7px 6px 6px;border:1px solid #161a21;box-shadow:inset 0 0 0 1px rgba(255,255,255,.55);background:#2f3947"></div><div style="left:376px;top:238px;width:1435px;height:25px;border-radius:6px 6px 0 0;background:linear-gradient(180deg,rgba(255,255,255,.06),rgba(255,255,255,0) 70%),linear-gradient(90deg,#47515f 0,#3f4a59 30%,#3a4554 52%,#394453 71%,#2b3442 75%,#28313e 88%,#333d4b 96%,#3a4452 100%)"></div><div style="left:394px;top:239px;width:725px;height:22px;background:rgba(255,255,255,.40);filter:blur(5px);border-radius:10px"></div><div style="left:1770px;top:238px;width:41px;height:25px;border-radius:0 6px 0 0;background:linear-gradient(90deg,rgba(200,218,238,0),rgba(200,218,238,.55) 45%,rgba(205,222,240,.95) 80%)"></div><div style="left:1806px;top:262px;width:6px;height:528px;background:linear-gradient(90deg,#dce9f7,#a9c6e8 50%,#c4d8ef)"></div><div style="left:1806px;top:790px;width:6px;height:8px;background:linear-gradient(#b6cde9,#2f3947)"></div><div style="left:376px;top:262px;width:5px;height:176px;background:linear-gradient(180deg,#6d7784,#8f97a2 40%,#b9bec6 100%)"></div><div style="left:376px;top:438px;width:5px;height:4px;background:linear-gradient(#b9bec6,#2f3947)"></div><div style="left:376px;top:735px;width:5px;height:57px;background:linear-gradient(90deg,#c3d5ea,#9db8da)"></div><div style="left:376px;top:792px;width:5px;height:6px;background:linear-gradient(#9db8da,#2f3947)"></div><svg style="left:381px;top:242px" width="16" height="16"><use href="#logo_red"/></svg><span class="t" style="left:402px;top:242px;font-size:12.3px;line-height:16px;color:#000;letter-spacing:.25px"><a>海</a><a>风</a><a>文</a><a>件</a><a>传</a><a>送</a><a>客</a><a>户</a><a>端</a> - d:\Desktop\<a>网</a><a>络</a><a>相</a><a>关</a>\<a>易</a><a>语</a><a>言</a><a>超</a><a>大</a><a>文</a><a>件</a><a>传</a><a>输</a><a>源</a><a>码</a>\<a>文</a><a>件</a><a>传</a><a>送</a><a>客</a><a>户</a><a>端</a>_1.e - Windows<a>窗</a><a>口</a><a>程</a><a>序</a> - [<a>窗</a><a>口</a>: _<a>启</a><a>动</a><a>窗</a><a>口</a>]</span><div style="left:375px;top:237px;width:1437px;height:28px;overflow:hidden;border-radius:6px 6px 0 0"><div style="left:1327px;top:-1px;width:104px;height:19px;border:1px solid rgba(30,30,30,.7);border-top:none;border-radius:0 0 5px 5px;overflow:hidden;box-shadow:0 0 0 1px rgba(255,255,255,.35),0 1px 7px 2px rgba(255,255,255,.28)"><div style="left:0px;top:0px;width:28px;height:18px;background:linear-gradient(rgba(255,255,255,.66) 0,rgba(255,255,255,.5) 45%,rgba(255,255,255,.16) 50%,rgba(255,255,255,.3) 100%);border-right:1px solid rgba(40,40,40,.55);box-shadow:inset 1px 0 rgba(255,255,255,.35)"><svg style="left:7px;top:3px" width="14" height="12"><use href="#aero_min"/></svg></div><div style="left:28px;top:0px;width:27px;height:18px;background:linear-gradient(rgba(255,255,255,.66) 0,rgba(255,255,255,.5) 45%,rgba(255,255,255,.16) 50%,rgba(255,255,255,.3) 100%);border-right:1px solid rgba(40,40,40,.55);box-shadow:inset 1px 0 rgba(255,255,255,.35)"><svg style="left:6px;top:3px" width="14" height="12"><use href="#aero_max"/></svg></div><div style="left:55px;top:0px;width:48px;height:18px;background:linear-gradient(#e9a99a 0,#d6715b 45%,#c03a20 50%,#c9492f 80%,#e08a6a 100%);border-right:1px solid rgba(40,40,40,.55);box-shadow:inset 1px 0 rgba(255,255,255,.35)"><svg style="left:17px;top:3px" width="14" height="12"><use href="#aero_close"/></svg></div></div></div><div style="left:380px;top:264px;width:1427px;height:724px;border:1px solid #20252e;box-shadow:0 0 0 1px rgba(255,255,255,.45)"></div><div style="left:381px;top:265px;width:1425px;height:722px;background:#f0f0f0;overflow:hidden"><div style="left:0px;top:0px;width:1425px;height:2px;background:#fff"></div><div style="left:2px;top:3px;width:3px;height:23px;border-left:1px solid #fff;border-right:1px solid #a0a0a0"></div><svg style="left:10px;top:5px" width="16" height="16"><use href="#logo_blue"/></svg><div style="left:27px;top:5px;width:43px;height:20px;border:1px solid;border-color:#fff #a0a0a0 #a0a0a0 #fff"></div><span class="t" style="left:30px;top:11px;"><u>F</u>.<a>程</a><a>序</a></span><span class="t" style="left:74px;top:11px;"><u>E</u>.<a>编</a><a>辑</a></span><span class="t" style="left:118px;top:11px;"><u>V</u>.<a>查</a><a>看</a></span><span class="t" style="left:163px;top:11px;"><u>I</u>.<a>插</a><a>入</a></span><span class="t" style="left:204px;top:11px;"><u>B</u>.<a>数</a><a>据</a><a>库</a></span><span class="t" style="left:261px;top:11px;"><u>R</u>.<a>运</a><a>行</a></span><span class="t" style="left:306px;top:11px;"><u>C</u>.<a>编</a><a>译</a></span><span class="t" style="left:351px;top:11px;"><u>T</u>.<a>工</a><a>具</a></span><span class="t" style="left:395px;top:11px;"><u>W</u>.<a>窗</a><a>口</a></span><span class="t" style="left:444px;top:11px;"><u>H</u>.<a>帮</a><a>助</a></span><span class="t" style="left:562px;top:8px;"><a>模</a><a>块</a></span><span class="t" style="left:603px;top:8px;"><a>支</a><a>持</a><a>库</a></span><span class="t" style="left:658px;top:8px;"><a>静</a><a>编</a></span><span class="t" style="left:706px;top:8px;"><a>便</a><a>签</a></span><span class="t" style="left:753px;top:8px;"><a>词</a><a>库</a></span><span class="t" style="left:819px;top:8px;"><a>设</a><a>置</a></span><svg style="left:792px;top:12px" width="9" height="5"><path d="M0,0h9l-4.5,5z" fill="#000"/></svg><svg style="left:857px;top:12px" width="9" height="5"><path d="M0,0h9l-4.5,5z" fill="#000"/></svg><div class="rb" style="left:1375px;top:10px;width:16px;height:15px;"><svg style="left:0px;top:0px" width="16" height="15"><use href="#cap_min"/></svg></div><div class="rb" style="left:1391px;top:10px;width:16px;height:15px;"><svg style="left:0px;top:0px" width="16" height="15"><use href="#cap_restore"/></svg></div><div class="rb" style="left:1409px;top:10px;width:16px;height:15px;"><svg style="left:0px;top:0px" width="16" height="15"><use href="#cap_close"/></svg></div><div style="left:0px;top:28px;width:1425px;height:1px;background:#a0a0a0"></div><div style="left:0px;top:29px;width:1425px;height:1px;background:#fff"></div><div style="left:2px;top:32px;width:3px;height:18px;border-left:1px solid #fff;border-right:1px solid #a0a0a0"></div><svg style="left:10px;top:32px" width="16" height="16"><use href="#new"/></svg><svg style="left:34px;top:32px" width="16" height="16"><use href="#open"/></svg><svg style="left:56px;top:32px" width="16" height="16"><use href="#save"/></svg><div style="left:79px;top:33px;width:1px;height:16px;background:#a0a0a0"></div><div style="left:80px;top:33px;width:1px;height:16px;background:#fff"></div><svg style="left:88px;top:32px" width="16" height="16"><use href="#cut"/></svg><svg style="left:110px;top:32px" width="16" height="16"><use href="#copy"/></svg><svg style="left:134px;top:32px" width="16" height="16"><use href="#paste"/></svg><svg style="left:156px;top:32px" width="16" height="16"><use href="#redo"/></svg><svg style="left:180px;top:32px" width="16" height="16"><use href="#undo"/></svg><div style="left:202px;top:33px;width:1px;height:16px;background:#a0a0a0"></div><div style="left:203px;top:33px;width:1px;height:16px;background:#fff"></div><svg style="left:210px;top:32px" width="16" height="16"><use href="#find"/></svg><div style="left:233px;top:33px;width:1px;height:16px;background:#a0a0a0"></div><div style="left:234px;top:33px;width:1px;height:16px;background:#fff"></div><div style="left:238px;top:31px;width:23px;height:20px;background:#f8f8f8;border:1px solid;border-color:#a0a0a0 #fff #fff #a0a0a0"></div><svg style="left:242px;top:32px" width="16" height="16"><use href="#lay1"/></svg><div style="left:261px;top:31px;width:23px;height:20px;background:#f8f8f8;border:1px solid;border-color:#a0a0a0 #fff #fff #a0a0a0"></div><svg style="left:264px;top:32px" width="16" height="16"><use href="#lay2"/></svg><svg style="left:288px;top:32px" width="16" height="16"><use href="#lay3"/></svg><div style="left:310px;top:33px;width:1px;height:16px;background:#a0a0a0"></div><div style="left:311px;top:33px;width:1px;height:16px;background:#fff"></div><svg style="left:318px;top:32px" width="16" height="16"><use href="#run"/></svg><svg style="left:342px;top:32px" width="16" height="16"><use href="#stop"/></svg><svg style="left:364px;top:32px" width="16" height="16"><use href="#dbg1"/></svg><svg style="left:388px;top:32px" width="16" height="16"><use href="#dbg2"/></svg><svg style="left:410px;top:32px" width="16" height="16"><use href="#dbg3"/></svg><svg style="left:434px;top:32px" width="16" height="16"><use href="#dbg4"/></svg><svg style="left:456px;top:32px" width="16" height="16"><use href="#dbg5"/></svg><svg style="left:480px;top:32px" width="16" height="16"><use href="#hand"/></svg><div style="left:502px;top:33px;width:1px;height:16px;background:#a0a0a0"></div><div style="left:503px;top:33px;width:1px;height:16px;background:#fff"></div><svg style="left:510px;top:32px" width="16" height="16"><use href="#bino"/></svg><div style="left:530px;top:31px;width:1px;height:20px;background:#a0a0a0"></div><div style="left:531px;top:31px;width:1px;height:20px;background:#fff"></div><div style="left:0px;top:51px;width:531px;height:1px;background:#a0a0a0"></div><div style="left:0px;top:52px;width:531px;height:1px;background:#fff"></div><div style="left:2px;top:55px;width:3px;height:18px;border-left:1px solid #fff;border-right:1px solid #a0a0a0"></div><svg style="left:10px;top:55px" width="16" height="16"><use href="#form"/></svg><div style="left:33px;top:56px;width:1px;height:16px;background:#a0a0a0"></div><div style="left:34px;top:56px;width:1px;height:16px;background:#fff"></div><svg style="left:42px;top:55px" width="16" height="16"><use href="#al1"/></svg><svg style="left:64px;top:55px" width="16" height="16"><use href="#al2"/></svg><svg style="left:88px;top:55px" width="16" height="16"><use href="#al3"/></svg><svg style="left:110px;top:55px" width="16" height="16"><use href="#al4"/></svg><div style="left:133px;top:56px;width:1px;height:16px;background:#a0a0a0"></div><div style="left:134px;top:56px;width:1px;height:16px;background:#fff"></div><svg style="left:142px;top:55px" width="16" height="16"><use href="#al5"/></svg><svg style="left:164px;top:55px" width="16" height="16"><use href="#al6"/></svg><svg style="left:188px;top:55px" width="16" height="16"><use href="#al7"/></svg><svg style="left:210px;top:55px" width="16" height="16"><use href="#al8"/></svg><svg style="left:234px;top:55px" width="16" height="16"><use href="#al9"/></svg><svg style="left:256px;top:55px" width="16" height="16"><use href="#al10"/></svg><div style="left:279px;top:56px;width:1px;height:16px;background:#a0a0a0"></div><div style="left:280px;top:56px;width:1px;height:16px;background:#fff"></div><svg style="left:288px;top:55px" width="16" height="16"><use href="#sz1"/></svg><svg style="left:310px;top:55px" width="16" height="16"><use href="#sz2"/></svg><svg style="left:334px;top:55px" width="16" height="16"><use href="#sz3"/></svg><div style="left:353px;top:54px;width:1px;height:20px;background:#a0a0a0"></div><div style="left:354px;top:54px;width:1px;height:20px;background:#fff"></div><div style="left:0px;top:74px;width:1425px;height:1px;background:#a0a0a0"></div><div style="left:0px;top:75px;width:1425px;height:1px;background:#fff"></div><div style="left:4px;top:83px;width:215px;height:2px;background:#fff"></div><div style="left:4px;top:85px;width:215px;height:1px;background:#a0a0a0"></div><div class="rb1" style="left:222px;top:79px;width:11px;height:11px;"><svg style="left:0px;top:0px" width="9" height="9"><use href="#sm_float"/></svg></div><div class="rb1" style="left:236px;top:79px;width:11px;height:11px;"><svg style="left:0px;top:0px" width="9" height="9"><use href="#sm_close"/></svg></div><div style="left:5px;top:95px;width:242px;height:322px;border:1px solid;border-color:#fff #a0a0a0 #a0a0a0 #fff"></div><div style="left:8px;top:98px;width:236px;height:315px;border:2px solid;border-color:#696969 #fff #fff #696969;background:#fff;overflow:hidden"><div style="left:0px;top:1px;width:230px;height:200px;"><svg style="left:1px;top:-1px" width="16" height="16"><use href="#t_root"/></svg><span class="t" style="left:21px;top:0px;"><a>程</a><a>序</a><a>数</a><a>据</a></span><div style="left:8px;top:15px;width:1px;height:121px;background:repeating-linear-gradient(#808080 0 1px,transparent 1px 2px)"></div><div style="left:9px;top:23px;width:11px;height:1px;background:repeating-linear-gradient(90deg,#808080 0 1px,transparent 1px 2px)"></div><div style="left:4px;top:19px;width:9px;height:9px;background:#fff;border:1px solid #808080"><i style="position:absolute;left:1px;top:3px;width:5px;height:1px;background:#000"></i><i style="position:absolute;left:3px;top:1px;width:1px;height:5px;background:#000"></i></div><svg style="left:20px;top:15px" width="16" height="16"><use href="#t_set"/></svg><div style="left:38px;top:16px;width:64px;height:16px;background:#f0f0f0"></div><span class="t" style="left:40px;top:17px;"><a>文</a><a>件</a><a>接</a><a>收</a><a>端</a></span><div style="left:9px;top:39px;width:11px;height:1px;background:repeating-linear-gradient(90deg,#808080 0 1px,transparent 1px 2px)"></div><div style="left:4px;top:35px;width:9px;height:9px;background:#fff;border:1px solid #808080"><i style="position:absolute;left:1px;top:3px;width:5px;height:1px;background:#000"></i><i style="position:absolute;left:3px;top:1px;width:1px;height:5px;background:#000"></i></div><svg style="left:20px;top:31px" width="16" height="16"><use href="#t_set"/></svg><span class="t" style="left:40px;top:33px;"><a>窗</a><a>口</a><a>程</a><a>序</a><a>集</a><span class="s6">1</span></span><div style="left:9px;top:55px;width:11px;height:1px;background:repeating-linear-gradient(90deg,#808080 0 1px,transparent 1px 2px)"></div><div style="left:4px;top:51px;width:9px;height:9px;background:#fff;border:1px solid #808080"><i style="position:absolute;left:1px;top:3px;width:5px;height:1px;background:#000"></i><i style="position:absolute;left:3px;top:1px;width:1px;height:5px;background:#000"></i></div><svg style="left:20px;top:47px" width="16" height="16"><use href="#t_dll"/></svg><span class="t" style="left:40px;top:49px;"><span class="s6">Dll</span><a>命</a><a>令</a></span><div style="left:9px;top:71px;width:11px;height:1px;background:repeating-linear-gradient(90deg,#808080 0 1px,transparent 1px 2px)"></div><div style="left:4px;top:67px;width:9px;height:9px;background:#fff;border:1px solid #808080"><i style="position:absolute;left:1px;top:3px;width:5px;height:1px;background:#000"></i><i style="position:absolute;left:3px;top:1px;width:1px;height:5px;background:#000"></i></div><svg style="left:20px;top:63px" width="16" height="16"><use href="#t_win"/></svg><span class="t" style="left:40px;top:65px;"><a>窗</a><a>口</a></span><div style="left:9px;top:87px;width:11px;height:1px;background:repeating-linear-gradient(90deg,#808080 0 1px,transparent 1px 2px)"></div><svg style="left:20px;top:79px" width="16" height="16"><use href="#t_const"/></svg><span class="t" style="left:40px;top:81px;"><a>常</a><a>量</a><a>表</a><span class="s6">...</span></span><div style="left:9px;top:103px;width:11px;height:1px;background:repeating-linear-gradient(90deg,#808080 0 1px,transparent 1px 2px)"></div><div style="left:4px;top:99px;width:9px;height:9px;background:#fff;border:1px solid #808080"><i style="position:absolute;left:1px;top:3px;width:5px;height:1px;background:#000"></i><i style="position:absolute;left:3px;top:1px;width:1px;height:5px;background:#000"></i></div><svg style="left:20px;top:95px" width="16" height="16"><use href="#t_res"/></svg><span class="t" style="left:40px;top:97px;"><a>资</a><a>源</a><a>表</a></span><div style="left:9px;top:119px;width:11px;height:1px;background:repeating-linear-gradient(90deg,#808080 0 1px,transparent 1px 2px)"></div><svg style="left:20px;top:111px" width="16" height="16"><use href="#t_mod"/></svg><span class="t" style="left:40px;top:113px;"><a>模</a><a>块</a><a>引</a><a>用</a><a>表</a></span><div style="left:9px;top:135px;width:11px;height:1px;background:repeating-linear-gradient(90deg,#808080 0 1px,transparent 1px 2px)"></div><svg style="left:20px;top:127px" width="16" height="16"><use href="#t_ext"/></svg><span class="t" style="left:40px;top:129px;"><a>外</a><a>部</a><a>文</a><a>件</a><a>记</a><a>录</a><a>表</a></span></div></div><div style="left:7px;top:417px;width:68px;height:19px;border:1px solid;border-color:transparent #696969 #696969 #fff;border-radius:0 0 3px 3px"></div><svg style="left:13px;top:418px" width="16" height="16"><use href="#tab_lib"/></svg><span class="t" style="left:33px;top:420px;"><a>支</a><a>持</a><a>库</a></span><div style="left:75px;top:416px;width:59px;height:22px;background:#f0f0f0;border:1px solid;border-color:transparent #696969 #696969 #fff;border-radius:0 0 3px 3px;box-shadow:inset -1px -1px #a0a0a0"></div><svg style="left:81px;top:421px" width="16" height="16"><use href="#tab_prog"/></svg><span class="t" style="left:104px;top:421px;"><a>程</a><a>序</a></span><div style="left:135px;top:417px;width:57px;height:19px;border:1px solid;border-color:transparent #696969 #696969 #696969;border-radius:0 0 3px 3px"></div><svg style="left:140px;top:418px" width="16" height="16"><use href="#tab_prop"/></svg><span class="t" style="left:163px;top:419px;"><a>属</a><a>性</a></span><div style="left:250px;top:76px;width:2px;height:362px;background:#fff"></div><div style="left:254px;top:76px;width:1px;height:362px;background:#7a7a7a"></div><div style="left:255px;top:75px;width:1036px;height:341px;background:#2b2f3a;overflow:hidden"><div style="left:4px;top:4px;width:7px;height:7px;border:1px solid #fff"></div><div style="left:4px;top:89px;width:7px;height:7px;border:1px solid #fff"></div><div style="left:4px;top:174px;width:7px;height:7px;border:1px solid #fff"></div><div style="left:263px;top:4px;width:7px;height:7px;border:1px solid #fff"></div><div style="left:263px;top:174px;width:7px;height:7px;background:#00008b;border:1px solid #fff"></div><div style="left:523px;top:4px;width:7px;height:7px;border:1px solid #fff"></div><div style="left:523px;top:89px;width:7px;height:7px;background:#00008b;border:1px solid #fff"></div><div style="left:523px;top:174px;width:7px;height:7px;background:#00008b;border:1px solid #fff"></div><div style="left:12px;top:12px;width:510px;height:161px;"><div style="left:0px;top:0px;width:510px;height:24px;background:linear-gradient(#98b3d5,#b9d1ea);border-radius:5px 5px 0 0"></div><span class="t" style="left:6px;top:5px;color:#1e1e1e"><a>网</a><a>络</a><a>文</a><a>件</a><a>传</a><a>送</a><a>客</a><a>户</a><a>端</a></span><div style="left:475px;top:5px;width:31px;height:16px;background:linear-gradient(#e3a99c,#c8513c 45%,#b5311c 55%,#d77d63);border:1px solid #5a2b22;border-radius:3px;box-shadow:inset 0 0 0 1px rgba(255,255,255,.45)"><svg style="left:9px;top:2px" width="12" height="10"><path d="M1.5,1.5L10.5,8.5M10.5,1.5L1.5,8.5" stroke="#5a2b22" stroke-width="4" stroke-linecap="square"/><path d="M1.5,1.5L10.5,8.5M10.5,1.5L1.5,8.5" stroke="#fff" stroke-width="2.2" stroke-linecap="square"/></svg></div><div style="left:0px;top:24px;width:510px;height:137px;background-color:#f0f0f0;background-image:linear-gradient(90deg,transparent 1px,#f0f0f0 1px),linear-gradient(#000 1px,#f0f0f0 1px);background-size:8px 8px;background-position:1px 0;border:1px solid;border-top:none;border-color:#f0f0f0 #bcd9f2 #3cc6ee #dfeaf6;overflow:hidden"><div style="left:9px;top:8px;width:72px;height:31px;background:#f0f0f0;white-space:nowrap;font-size:12px;line-height:31px;padding-left:0px;overflow:hidden"><a>服</a><a>务</a><span style="margin-left:26px">:</span></div><div style="left:33px;top:16px;width:26px;height:26px;background:#b4b4b4;border:1px solid #8c8c8c"><svg style="left:1px;top:1px" width="22" height="22"><use href="#c_win"/></svg></div><div style="left:89px;top:8px;width:168px;height:31px;background:#fff;border:2px solid;border-color:#696969 #fff #fff #696969;box-shadow:inset 0 0 0 0 #000;text-align:center;line-height:27px;font-family:Liberation Serif,serif;font-size:20px;line-height:27px">192. 168. 1. 3</div><div style="left:270px;top:8px;width:34px;height:31px;background:#f0f0f0;white-space:nowrap;font-size:12px;line-height:31px;padding-left:0px;overflow:hidden"><a>端</a><a>口</a>:</div><div style="left:313px;top:8px;width:71px;height:31px;background:#fff;border:2px solid;border-color:#696969 #fff #fff #696969;box-shadow:inset 0 0 0 0 #000;text-align:center;line-height:27px;font-family:Liberation Serif,serif;font-size:20px;line-height:27px">9119</div><div style="left:393px;top:8px;width:48px;height:32px;background:#f0f0f0;border:1px solid;border-color:#fff #000 #000 #fff;box-shadow:inset -1px -1px #a0a0a0;text-align:center;line-height:30px;font-size:12px"><a>连</a><a>接</a></div><div style="left:449px;top:8px;width:48px;height:32px;background:#f0f0f0;border:1px solid;border-color:#fff #000 #000 #fff;box-shadow:inset -1px -1px #a0a0a0;text-align:center;line-height:30px;font-size:12px"><a>断</a><a>开</a></div><div style="left:9px;top:48px;width:72px;height:31px;background:#f0f0f0;white-space:nowrap;font-size:12px;line-height:31px;padding-left:0px;overflow:hidden"><a>远</a><a>程</a><span style="margin-left:26px"><a>名</a>:</span></div><div style="left:33px;top:56px;width:26px;height:26px;background:#b4b4b4;border:1px solid #8c8c8c"><svg style="left:0px;top:0px" width="24" height="24"><use href="#c_timer"/></svg></div><div style="left:89px;top:49px;width:336px;height:30px;background:#fff;border:2px solid;border-color:#696969 #fff #fff #696969;box-shadow:inset 0 0 0 0 #000;text-align:center;line-height:26px;"></div><div style="left:441px;top:48px;width:56px;height:32px;background:#f0f0f0;border:1px solid;border-color:#fff #000 #000 #fff;box-shadow:inset -1px -1px #a0a0a0;text-align:center;line-height:30px;font-size:12px"><a>按</a><a>钮</a></div><div style="left:9px;top:87px;width:488px;height:24px;background:#f0f0f0;white-space:nowrap;font-size:12px;line-height:26px;padding-left:0px;overflow:hidden"><a>当</a><a>前</a><a>状</a><a>态</a></div><div style="left:9px;top:117px;width:488px;height:8px;border:1px solid;border-color:#a0a0a0 #fff #fff #a0a0a0;background:#f0f0f0"></div></div></div></div><div style="left:255px;top:416px;width:1036px;height:1px;background:#d8d8d8"></div><div style="left:255px;top:417px;width:1036px;height:1px;background:#fff"></div><div style="left:255px;top:418px;width:1037px;height:20px;overflow:hidden"><svg style="left:0;top:0" width="400" height="20"><path d="M2,2L9,19H75L82,2" fill="#fff" stroke="#000" stroke-width="1"/><path d="M75,19H193M186,2L193,19H279M271,2L279,19H351L358,2" fill="none" stroke="#000" stroke-width="1"/></svg><span class="t" style="left:12px;top:3px;font-weight:bold;color:#00008b">_<a>启</a><a>动</a><a>窗</a><a>口</a></span><span class="t" style="left:90px;top:3px;color:#808000"><span class="s6">[Dll</span><a>命</a><a>令</a><a>定</a><a>义</a><a>表</a><span class="s6">]</span></span><span class="t" style="left:200px;top:3px;"><a>窗</a><a>口</a><a>程</a><a>序</a><a>集</a><span class="s6">1</span></span><span class="t" style="left:284px;top:3px;"><a>文</a><a>件</a><a>接</a><a>收</a><a>端</a></span></div><div style="left:1291px;top:75px;width:2px;height:363px;background:#fff"></div><div style="left:1296px;top:76px;width:1px;height:362px;background:#a0a0a0"></div><div style="left:1296px;top:83px;width:78px;height:2px;background:#fff"></div><div style="left:1296px;top:85px;width:78px;height:1px;background:#a0a0a0"></div><div class="rb1" style="left:1378px;top:79px;width:11px;height:11px;"><svg style="left:0px;top:0px" width="9" height="9"><use href="#sm_menu"/></svg></div><div class="rb1" style="left:1391px;top:79px;width:11px;height:11px;"><svg style="left:0px;top:0px" width="9" height="9"><use href="#sm_float"/></svg></div><div class="rb1" style="left:1404px;top:79px;width:11px;height:11px;"><svg style="left:0px;top:0px" width="9" height="9"><use href="#sm_close"/></svg></div><div style="left:1302px;top:96px;width:116px;height:19px;border:1px solid;border-color:#fff #808080 #808080 #fff;box-shadow:inset 1px 1px #fff;text-align:center"><span class="tc"><a>基</a><a>本</a><a>组</a><a>件</a><span class="s6">1</span></span></div><div style="left:1302px;top:125px;width:27px;height:27px;border:1px solid;border-color:#000 #fff #fff #000;background:#f6f6f6"></div><svg style="left:1304px;top:127px" width="24" height="24"><use href="#c_arrow"/></svg><svg style="left:1333px;top:127px" width="24" height="24"><use href="#c_edit"/></svg><svg style="left:1362px;top:127px" width="24" height="24"><use href="#c_pic"/></svg><svg style="left:1391px;top:127px" width="24" height="24"><use href="#c_shape"/></svg><svg style="left:1304px;top:156px" width="24" height="24"><use href="#c_draw"/></svg><svg style="left:1333px;top:156px" width="24" height="24"><use href="#c_group"/></svg><svg style="left:1362px;top:156px" width="24" height="24"><use href="#c_label"/></svg><svg style="left:1391px;top:156px" width="24" height="24"><use href="#c_button"/></svg><svg style="left:1304px;top:185px" width="24" height="24"><use href="#c_check"/></svg><svg style="left:1333px;top:185px" width="24" height="24"><use href="#c_radio"/></svg><svg style="left:1362px;top:185px" width="24" height="24"><use href="#c_combo"/></svg><svg style="left:1391px;top:185px" width="24" height="24"><use href="#c_list"/></svg><svg style="left:1304px;top:214px" width="24" height="24"><use href="#c_chklist"/></svg><svg style="left:1333px;top:214px" width="24" height="24"><use href="#c_hscroll"/></svg><svg style="left:1362px;top:214px" width="24" height="24"><use href="#c_vscroll"/></svg><svg style="left:1391px;top:214px" width="24" height="24"><use href="#c_progress"/></svg><svg style="left:1304px;top:243px" width="24" height="24"><use href="#c_slider"/></svg><svg style="left:1333px;top:243px" width="24" height="24"><use href="#c_tab"/></svg><svg style="left:1362px;top:243px" width="24" height="24"><use href="#c_film"/></svg><svg style="left:1391px;top:243px" width="24" height="24"><use href="#c_ext"/></svg><svg style="left:1304px;top:272px" width="24" height="24"><use href="#c_cal"/></svg><svg style="left:1333px;top:272px" width="24" height="24"><use href="#c_drive"/></svg><svg style="left:1362px;top:272px" width="24" height="24"><use href="#c_dir"/></svg><svg style="left:1391px;top:272px" width="24" height="24"><use href="#c_file"/></svg><svg style="left:1304px;top:301px" width="24" height="24"><use href="#c_color"/></svg><svg style="left:1333px;top:301px" width="24" height="24"><use href="#c_net"/></svg><svg style="left:1362px;top:301px" width="24" height="24"><use href="#c_updown"/></svg><svg style="left:1391px;top:301px" width="24" height="24"><use href="#c_win"/></svg><div style="left:1302px;top:331px;width:116px;height:19px;border:1px solid;border-color:#fff #808080 #808080 #fff;box-shadow:inset 1px 1px #fff;text-align:center"><span class="tc"><a>基</a><a>本</a><a>组</a><a>件</a><span class="s6">2</span></span></div><div style="left:1302px;top:352px;width:116px;height:19px;border:1px solid;border-color:#fff #808080 #808080 #fff;box-shadow:inset 1px 1px #fff;text-align:center"><span class="tc"><a>扩</a><a>展</a><a>组</a><a>件</a><span class="s6">1</span></span></div><div style="left:1302px;top:373px;width:116px;height:19px;border:1px solid;border-color:#fff #808080 #808080 #fff;box-shadow:inset 1px 1px #fff;text-align:center"><span class="tc"><a>扩</a><a>展</a><a>组</a><a>件</a><span class="s6">2</span></span></div><div style="left:1302px;top:394px;width:116px;height:19px;border:1px solid;border-color:#fff #808080 #808080 #fff;box-shadow:inset 1px 1px #fff;text-align:center"><span class="tc"><a>扩</a><a>展</a><a>组</a><a>件</a><span class="s6">3</span></span></div><div style="left:1302px;top:415px;width:116px;height:19px;border:1px solid;border-color:#fff #808080 #808080 #fff;box-shadow:inset 1px 1px #fff;text-align:center"><span class="tc"><a>扩</a><a>展</a><a>组</a><a>件</a><span class="s6">4</span></span></div><div style="left:0px;top:438px;width:1425px;height:1px;background:#fff"></div><div style="left:0px;top:443px;width:1425px;height:1px;background:#a0a0a0"></div><div style="left:0px;top:444px;width:1425px;height:1px;background:#fff"></div><div class="rb1" style="left:3px;top:448px;width:11px;height:11px;"><svg style="left:0px;top:0px" width="9" height="9"><use href="#sm_close"/></svg></div><div class="rb1" style="left:3px;top:461px;width:11px;height:11px;"><svg style="left:0px;top:0px" width="9" height="9"><use href="#sm_float"/></svg></div><div style="left:9px;top:476px;width:1px;height:232px;background:#a0a0a0"></div><div style="left:10px;top:476px;width:1px;height:232px;background:#fff"></div><div style="left:21px;top:450px;width:56px;height:18px;border:1px solid;border-color:#fff #a0a0a0 transparent #fff;"></div><svg style="left:28px;top:450px" width="16" height="16"><use href="#o_hint"/></svg><span class="t" style="left:48px;top:452px;"><a>提</a><a>示</a></span><div style="left:77px;top:447px;width:61px;height:23px;background:#f0f0f0;border:1px solid;border-color:#fff #696969 transparent #fff;border-radius:2px 2px 0 0;box-shadow:inset -1px 0 #a0a0a0"></div><svg style="left:85px;top:448px" width="16" height="16"><use href="#o_out"/></svg><span class="t" style="left:106px;top:450px;"><a>输</a><a>出</a></span><div style="left:139px;top:450px;width:67px;height:18px;border:1px solid;border-color:#fff #a0a0a0 transparent #fff;"></div><svg style="left:146px;top:450px" width="16" height="16"><use href="#o_call"/></svg><span class="t" style="left:166px;top:452px;"><a>调</a><a>用</a><a>表</a></span><div style="left:207px;top:450px;width:68px;height:18px;border:1px solid;border-color:#fff #a0a0a0 transparent #fff;"></div><svg style="left:214px;top:450px" width="16" height="16"><use href="#o_watch"/></svg><span class="t" style="left:234px;top:452px;"><a>监</a><a>视</a><a>表</a></span><div style="left:276px;top:450px;width:69px;height:18px;border:1px solid;border-color:#fff #a0a0a0 transparent #fff;"></div><svg style="left:283px;top:450px" width="16" height="16"><use href="#o_var"/></svg><span class="t" style="left:303px;top:452px;"><a>变</a><a>量</a><a>表</a></span><div style="left:346px;top:450px;width:63px;height:18px;border:1px solid;border-color:#fff #a0a0a0 transparent #fff;"></div><svg style="left:353px;top:450px" width="16" height="16"><use href="#o_find"/></svg><span class="t" style="left:373px;top:452px;"><a>搜</a><a>寻</a><span class="s6">1</span></span><div style="left:410px;top:450px;width:64px;height:18px;border:1px solid;border-color:#fff #a0a0a0 transparent #fff;"></div><svg style="left:417px;top:450px" width="16" height="16"><use href="#o_find"/></svg><span class="t" style="left:437px;top:452px;"><a>搜</a><a>寻</a><span class="s6">2</span></span><div style="left:476px;top:450px;width:80px;height:18px;border:1px solid;border-color:#fff #a0a0a0 transparent #fff;"></div><svg style="left:483px;top:450px" width="16" height="16"><use href="#o_clip"/></svg><span class="t" style="left:503px;top:452px;"><a>剪</a><a>辑</a><a>历</a><a>史</a></span><div style="left:19px;top:469px;width:1401px;height:247px;border:1px solid;border-color:#fff #696969 #696969 #fff"></div><div style="left:20px;top:470px;width:1399px;height:245px;border:1px solid;border-color:#fff #a0a0a0 #a0a0a0 #fff"></div><div style="left:22px;top:474px;width:1395px;height:236px;border:1px solid;border-color:#696969 #fff #fff #696969;background:#2b2f3a;overflow:hidden"><svg style="left:3px;top:3px" width="15" height="15"><path d="M7.5,0L15,7.5L7.5,15L0,7.5z" fill="#fff"/></svg><span class="o" style="left:27px;top:2px;"><a>易</a><a>语</a><a>言</a><a>助</a><a>手</a><a>提</a><a>醒</a><a>您</a></span><span class="o m" style="left:155px;top:2px;">:</span><span class="o" style="left:179px;top:2px;"><a>易</a><a>语</a><a>言</a><a>助</a><a>手</a><a>加</a><a>载</a><a>完</a><a>毕</a></span><span class="o m" style="left:323px;top:2px;">!</span><span class="o" style="left:347px;top:2px;"><a>词</a><a>库</a><a>功</a><a>能</a></span><span class="o m" style="left:411px;top:2px;">[</span><span class="o" style="left:419px;top:2px;"><a>关</a><a>闭</a></span><span class="o m" style="left:451px;top:2px;">]</span><span class="o m" style="left:459px;top:2px;">,</span><span class="o" style="left:475px;top:2px;"><a>自</a><a>动</a><a>备</a><a>份</a><a>源</a><a>码</a><a>已</a><a>开</a><a>启</a></span><span class="o m" style="left:619px;top:2px;">,</span><span class="o" style="left:635px;top:2px;"><a>自</a><a>动</a><a>保</a><a>存</a><a>已</a><a>开</a><a>启</a></span><span class="o m" style="left:747px;top:2px;">!</span><span class="o" style="left:771px;top:2px;"><a>当</a><a>前</a><a>易</a><a>版</a><a>本</a></span><span class="o m" style="left:851px;top:2px;">:</span><span class="o m" style="left:867px;top:2px;">5.8</span><span class="o" style="left:907px;top:2px;"><a>当</a><a>前</a><a>系</a><a>统</a></span><span class="o m" style="left:971px;top:2px;">:</span><span class="o m" style="left:987px;top:2px;">Win7</span><svg style="left:3px;top:35px" width="15" height="15"><path d="M7.5,0L15,7.5L7.5,15L0,7.5z" fill="#fff"/></svg><span class="o" style="left:27px;top:34px;"><a>易</a><a>语</a><a>言</a><a>助</a><a>手</a><a>提</a><a>醒</a><a>您</a></span><span class="o m" style="left:155px;top:34px;">:</span><span class="o" style="left:171px;top:34px;"><a>【</a><a>自</a><a>动</a><a>保</a><a>存</a><a>】</a><a>启</a><a>动</a><a>成</a><a>功</a></span><span class="o m" style="left:331px;top:34px;">,</span><span class="o" style="left:347px;top:34px;"><a>时</a><a>间</a><a>周</a><a>期</a><a>为</a></span><span class="o m" style="left:427px;top:34px;">:</span><span class="o m" style="left:443px;top:34px;">300</span><span class="o" style="left:467px;top:34px;"><a>秒</a><a>自</a><a>动</a><a>保</a><a>存</a></span><span class="o m" style="left:547px;top:34px;">1</span><span class="o" style="left:555px;top:34px;"><a>次</a></span><span class="o m" style="left:571px;top:34px;">!</span><svg style="left:3px;top:51px" width="15" height="15"><path d="M7.5,0L15,7.5L7.5,15L0,7.5z" fill="#fff"/></svg><span class="o" style="left:27px;top:50px;"><a>易</a><a>语</a><a>言</a><a>助</a><a>手</a><a>提</a><a>醒</a><a>您</a></span><span class="o m" style="left:155px;top:50px;">:</span><span class="o" style="left:171px;top:50px;"><a>自</a><a>动</a><a>加</a><a>载</a><a>模</a><a>块</a><a>超</a><a>时</a></span><span class="o m" style="left:299px;top:50px;">,</span><span class="o" style="left:315px;top:50px;"><a>模</a><a>块</a></span><span class="o m" style="left:347px;top:50px;">:</span><span class="o m" style="left:363px;top:50px;">25234656</span><span class="o m" style="left:427px;top:50px;">!</span><div style="left:1375px;top:0px;width:18px;height:234px;background:#f0f0f0;border-left:1px solid #fff;border-right:1px solid #fff"></div><svg style="left:1380px;top:7px" width="8" height="4"><path d="M0,4h8l-4,-4z" fill="#a9a9a9"/></svg><svg style="left:1380px;top:223px" width="8" height="4"><path d="M0,0h8l-4,4z" fill="#a9a9a9"/></svg></div></div></body></html>
